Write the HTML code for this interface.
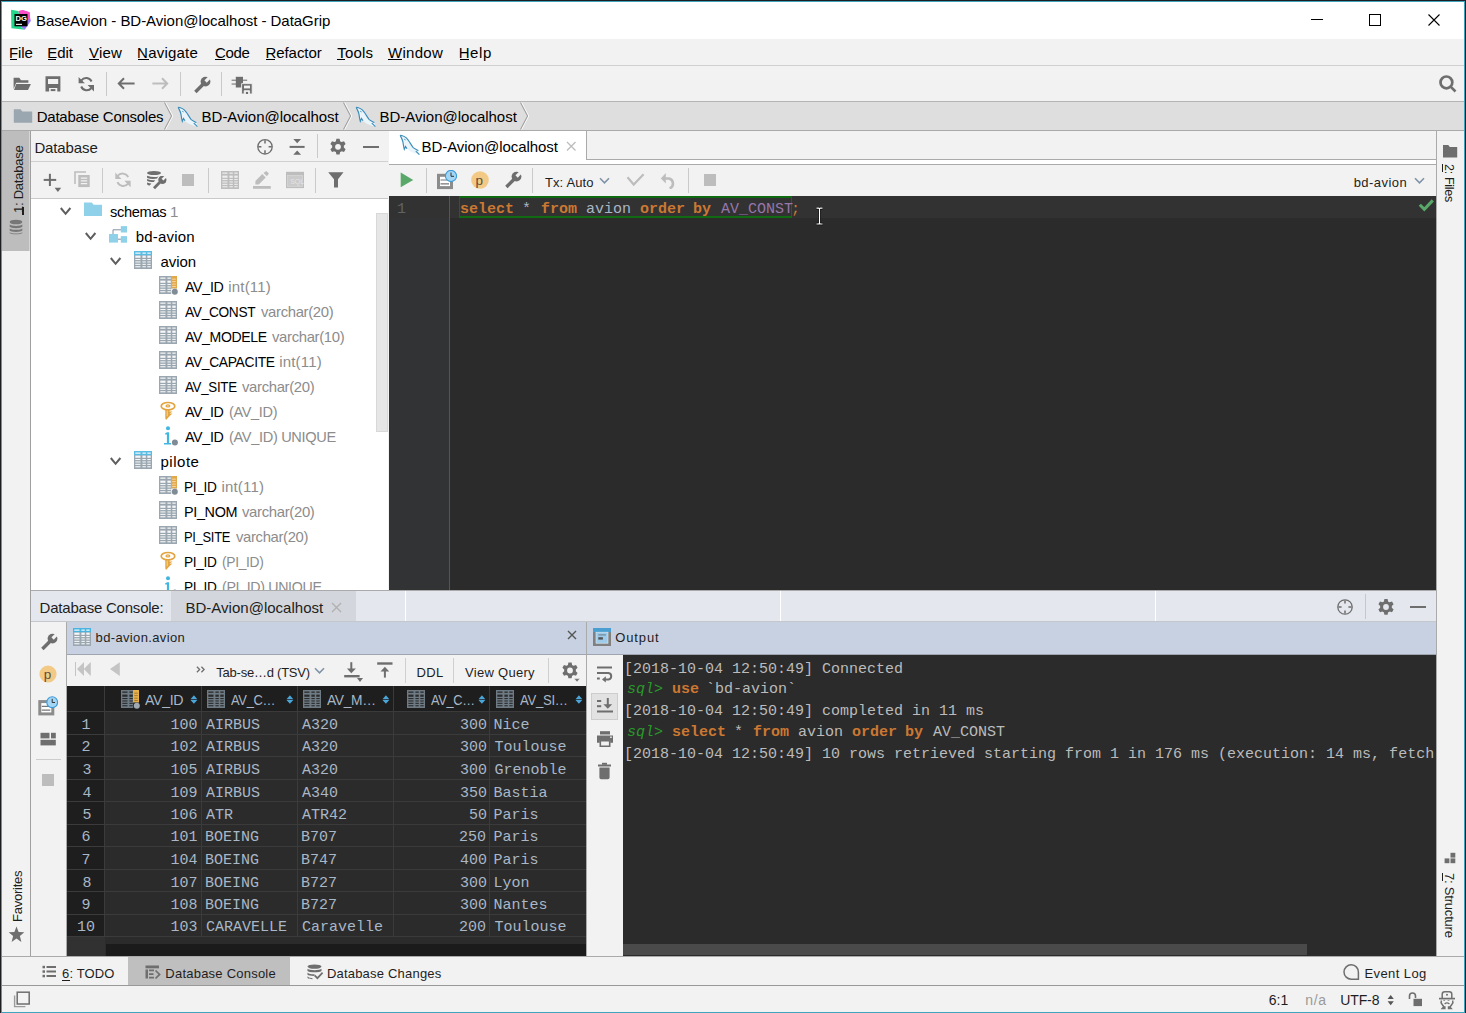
<!DOCTYPE html>
<html><head><meta charset="utf-8">
<style>
*{margin:0;padding:0;box-sizing:border-box}
html,body{width:1466px;height:1013px;overflow:hidden;background:#1c1f22}
body{position:relative;font-family:"Liberation Sans",sans-serif;font-size:15px;color:#000}
.a{position:absolute;display:block}
.t{position:absolute;white-space:nowrap;line-height:1}
</style></head><body>
<div class="a" style="left:1px;top:1px;width:1464px;height:1012px;background:#3fa3bd;"></div>
<div class="a" style="left:2px;top:2px;width:1462px;height:1010px;background:#f2f2f2;"></div>
<div class="a" style="left:2px;top:2px;width:1462px;height:37px;background:#ffffff;"></div>
<div class="t" style="left:36.00px;top:13.30px;font-size:15px;color:#000;letter-spacing:-0.032px;">BaseAvion - BD-Avion@localhost - DataGrip</div>
<div class="a" style="left:2px;top:39px;width:1462px;height:26px;background:#f2f2f2;"></div>
<div class="a" style="left:2px;top:65px;width:1462px;height:1px;background:#d0d0d0;"></div>
<div class="t" style="left:9.00px;top:45.30px;font-size:15px;color:#000;letter-spacing:-0.143px;">File</div>
<div class="t" style="left:47.30px;top:45.30px;font-size:15px;color:#000;letter-spacing:-0.093px;">Edit</div>
<div class="t" style="left:89.00px;top:45.30px;font-size:15px;color:#000;letter-spacing:0.197px;">View</div>
<div class="t" style="left:137.10px;top:45.30px;font-size:15px;color:#000;letter-spacing:0.220px;">Navigate</div>
<div class="t" style="left:215.00px;top:45.30px;font-size:15px;color:#000;letter-spacing:-0.306px;">Code</div>
<div class="t" style="left:265.40px;top:45.30px;font-size:15px;color:#000;letter-spacing:-0.042px;">Refactor</div>
<div class="t" style="left:337.20px;top:45.30px;font-size:15px;color:#000;letter-spacing:0.221px;">Tools</div>
<div class="t" style="left:388.00px;top:45.30px;font-size:15px;color:#000;letter-spacing:0.297px;">Window</div>
<div class="t" style="left:458.70px;top:45.30px;font-size:15px;color:#000;letter-spacing:0.564px;">Help</div>
<div class="a" style="left:2px;top:66px;width:1462px;height:35px;background:#f2f2f2;"></div>
<div class="a" style="left:2px;top:101px;width:1462px;height:1px;background:#b4b4b4;"></div>
<div class="a" style="left:2px;top:102px;width:1462px;height:28px;background:#dedede;"></div>
<div class="a" style="left:2px;top:130px;width:1462px;height:1px;background:#aaaaaa;"></div>
<div class="t" style="left:36.80px;top:109.30px;font-size:15px;color:#000;letter-spacing:-0.263px;">Database Consoles</div>
<div class="t" style="left:201.60px;top:109.30px;font-size:15px;color:#000;letter-spacing:-0.020px;">BD-Avion@localhost</div>
<div class="t" style="left:379.50px;top:109.30px;font-size:15px;color:#000;letter-spacing:-0.009px;">BD-Avion@localhost</div>
<div class="a" style="left:2px;top:131px;width:28px;height:825px;background:#f2f2f2;"></div>
<div class="a" style="left:2px;top:131px;width:27px;height:120px;background:#bdbdbd;"></div>
<div class="a" style="left:29px;top:131px;width:1px;height:120px;background:#d6d6d6;"></div>
<div class="a" style="left:30px;top:131px;width:1px;height:825px;background:#a0a0a0;"></div>
<div class="a" style="left:31px;top:131px;width:357px;height:30px;background:#f2f2f2;"></div>
<div class="a" style="left:31px;top:161px;width:357px;height:1px;background:#d0d0d0;"></div>
<div class="a" style="left:31px;top:162px;width:357px;height:36px;background:#f2f2f2;"></div>
<div class="a" style="left:31px;top:198px;width:357px;height:1px;background:#c9c9c9;"></div>
<div class="a" style="left:31px;top:199px;width:357px;height:391px;background:#ffffff;"></div>
<div class="a" style="left:376px;top:213px;width:12px;height:219px;background:#e6e6e6;border:1px solid #d8d8d8;"></div>
<div class="t" style="left:34.40px;top:140.30px;font-size:15px;color:#1e1e1e;letter-spacing:-0.124px;">Database</div>
<div class="t" style="left:110.00px;top:204.30px;font-size:15px;color:#000;letter-spacing:-0.350px;transform-origin:0 0;transform:scaleX(0.9761);">schemas</div>
<div class="t" style="left:170.10px;top:204.30px;font-size:15px;color:#8c8c8c;">1</div>
<div class="t" style="left:135.70px;top:229.30px;font-size:15px;color:#000;letter-spacing:0.200px;">bd-avion</div>
<div class="t" style="left:160.50px;top:254.30px;font-size:15px;color:#000;letter-spacing:-0.079px;">avion</div>
<div class="t" style="left:185.30px;top:279.30px;font-size:15px;color:#000;letter-spacing:-0.350px;transform-origin:0 0;transform:scaleX(0.9503);">AV_ID</div>
<div class="t" style="left:228.30px;top:279.30px;font-size:15px;color:#8c8c8c;letter-spacing:0.182px;">int(11)</div>
<div class="t" style="left:185.30px;top:304.30px;font-size:15px;color:#000;letter-spacing:-0.350px;transform-origin:0 0;transform:scaleX(0.9142);">AV_CONST</div>
<div class="t" style="left:260.70px;top:304.30px;font-size:15px;color:#8c8c8c;letter-spacing:-0.350px;transform-origin:0 0;transform:scaleX(0.9922);">varchar(20)</div>
<div class="t" style="left:185.30px;top:329.30px;font-size:15px;color:#000;letter-spacing:-0.350px;transform-origin:0 0;transform:scaleX(0.9362);">AV_MODELE</div>
<div class="t" style="left:272.40px;top:329.30px;font-size:15px;color:#8c8c8c;letter-spacing:-0.350px;transform-origin:0 0;transform:scaleX(0.9922);">varchar(10)</div>
<div class="t" style="left:185.30px;top:354.30px;font-size:15px;color:#000;letter-spacing:-0.350px;transform-origin:0 0;transform:scaleX(0.9225);">AV_CAPACITE</div>
<div class="t" style="left:279.20px;top:354.30px;font-size:15px;color:#8c8c8c;letter-spacing:0.182px;">int(11)</div>
<div class="t" style="left:185.30px;top:379.30px;font-size:15px;color:#000;letter-spacing:-0.350px;transform-origin:0 0;transform:scaleX(0.8898);">AV_SITE</div>
<div class="t" style="left:242.20px;top:379.30px;font-size:15px;color:#8c8c8c;letter-spacing:-0.350px;transform-origin:0 0;transform:scaleX(0.9922);">varchar(20)</div>
<div class="t" style="left:185.30px;top:404.30px;font-size:15px;color:#000;letter-spacing:-0.350px;transform-origin:0 0;transform:scaleX(0.9503);">AV_ID</div>
<div class="t" style="left:229.30px;top:404.30px;font-size:15px;color:#8c8c8c;letter-spacing:-0.350px;transform-origin:0 0;transform:scaleX(0.9668);">(AV_ID)</div>
<div class="t" style="left:185.30px;top:429.30px;font-size:15px;color:#000;letter-spacing:-0.350px;transform-origin:0 0;transform:scaleX(0.9503);">AV_ID</div>
<div class="t" style="left:229.30px;top:429.30px;font-size:15px;color:#8c8c8c;letter-spacing:-0.350px;transform-origin:0 0;transform:scaleX(0.9732);">(AV_ID) UNIQUE</div>
<div class="t" style="left:160.50px;top:454.30px;font-size:15px;color:#000;letter-spacing:0.517px;">pilote</div>
<div class="t" style="left:184.39px;top:479.30px;font-size:15px;color:#000;letter-spacing:-0.350px;transform-origin:0 0;transform:scaleX(0.9105);">PI_ID</div>
<div class="t" style="left:221.40px;top:479.30px;font-size:15px;color:#8c8c8c;letter-spacing:0.199px;">int(11)</div>
<div class="t" style="left:184.34px;top:504.30px;font-size:15px;color:#000;letter-spacing:-0.350px;transform-origin:0 0;transform:scaleX(0.9596);">PI_NOM</div>
<div class="t" style="left:242.40px;top:504.30px;font-size:15px;color:#8c8c8c;letter-spacing:-0.350px;transform-origin:0 0;transform:scaleX(0.9948);">varchar(20)</div>
<div class="t" style="left:184.44px;top:529.30px;font-size:15px;color:#000;letter-spacing:-0.350px;transform-origin:0 0;transform:scaleX(0.8624);">PI_SITE</div>
<div class="t" style="left:235.60px;top:529.30px;font-size:15px;color:#8c8c8c;letter-spacing:-0.350px;transform-origin:0 0;transform:scaleX(0.9896);">varchar(20)</div>
<div class="t" style="left:184.39px;top:554.30px;font-size:15px;color:#000;letter-spacing:-0.350px;transform-origin:0 0;transform:scaleX(0.9105);">PI_ID</div>
<div class="t" style="left:222.40px;top:554.30px;font-size:15px;color:#8c8c8c;letter-spacing:-0.350px;transform-origin:0 0;transform:scaleX(0.9198);">(PI_ID)</div>
<div class="t" style="left:184.39px;top:579.30px;font-size:15px;color:#000;letter-spacing:-0.350px;transform-origin:0 0;transform:scaleX(0.9105);">PI_ID</div>
<div class="t" style="left:222.40px;top:579.30px;font-size:15px;color:#8c8c8c;letter-spacing:-0.350px;transform-origin:0 0;transform:scaleX(0.9468);">(PI_ID) UNIQUE</div>
<div class="a" style="left:389px;top:131px;width:1047px;height:34px;background:#f2f2f2;"></div>
<div class="a" style="left:389px;top:159px;width:1047px;height:1px;background:#aaaaaa;"></div>
<div class="a" style="left:389px;top:160px;width:1047px;height:4px;background:#ffffff;"></div>
<div class="a" style="left:389px;top:164px;width:1047px;height:1px;background:#aaaaaa;"></div>
<div class="a" style="left:389px;top:131px;width:197px;height:33px;background:#ffffff;"></div>
<div class="a" style="left:586px;top:131px;width:1px;height:29px;background:#aaaaaa;"></div>
<div class="t" style="left:421.50px;top:139.30px;font-size:15px;color:#000;letter-spacing:-0.061px;">BD-Avion@localhost</div>
<div class="a" style="left:389px;top:165px;width:1047px;height:31px;background:#f2f2f2;"></div>
<div class="t" style="left:544.90px;top:176.00px;font-size:13px;color:#1e1e1e;letter-spacing:0.146px;">Tx: Auto</div>
<div class="t" style="left:1353.70px;top:176.00px;font-size:13px;color:#1e1e1e;letter-spacing:0.452px;">bd-avion</div>
<div class="a" style="left:389px;top:196px;width:1047px;height:394px;background:#2b2b2b;"></div>
<div class="a" style="left:389px;top:196px;width:60px;height:394px;background:#313335;"></div>
<div class="a" style="left:389px;top:196px;width:1047px;height:22px;background:#323232;"></div>
<div class="a" style="left:449px;top:196px;width:1px;height:394px;background:#555555;"></div>
<div class="a" style="left:459px;top:196px;width:333px;height:22px;background:transparent;border:2px solid #0f6a12;border-left-width:1.5px;border-right-width:1.5px;"></div>
<div class="t" style="left:460.00px;top:201.50px;font-size:15px;color:#cc7832;font-family:'Liberation Mono';font-weight:bold;">select</div>
<div class="t" style="left:522.00px;top:201.50px;font-size:15px;color:#a9b7c6;font-family:'Liberation Mono';">*</div>
<div class="t" style="left:541.00px;top:201.50px;font-size:15px;color:#cc7832;font-family:'Liberation Mono';font-weight:bold;">from</div>
<div class="t" style="left:586.00px;top:201.50px;font-size:15px;color:#a9b7c6;font-family:'Liberation Mono';">avion</div>
<div class="t" style="left:640.00px;top:201.50px;font-size:15px;color:#cc7832;font-family:'Liberation Mono';font-weight:bold;">order</div>
<div class="t" style="left:693.00px;top:201.50px;font-size:15px;color:#cc7832;font-family:'Liberation Mono';font-weight:bold;">by</div>
<div class="t" style="left:721.00px;top:201.50px;font-size:15px;color:#9876aa;font-family:'Liberation Mono';">AV_CONST</div>
<div class="t" style="left:791.00px;top:201.50px;font-size:15px;color:#cc7832;font-family:'Liberation Mono';">;</div>
<div class="t" style="left:397.00px;top:201.50px;font-size:15px;color:#606366;font-family:'Liberation Mono';">1</div>
<div class="a" style="left:389px;top:196px;width:1047px;height:394px;background:transparent;"></div>
<div class="a" style="left:1436px;top:131px;width:1px;height:825px;background:#aaaaaa;"></div>
<div class="a" style="left:1437px;top:131px;width:27px;height:825px;background:#f2f2f2;"></div>
<div class="a" style="left:31px;top:590px;width:1405px;height:1px;background:#aaaaaa;"></div>
<div class="a" style="left:31px;top:591px;width:1405px;height:30px;background:#e4e7ee;"></div>
<div class="a" style="left:31px;top:621px;width:1405px;height:1px;background:#c4c7cc;"></div>
<div class="a" style="left:171px;top:591px;width:185px;height:30px;background:#d3d6dc;"></div>
<div class="a" style="left:405px;top:591px;width:1px;height:30px;background:#ffffff;"></div>
<div class="a" style="left:780px;top:591px;width:1px;height:30px;background:#ffffff;"></div>
<div class="a" style="left:1155px;top:591px;width:1px;height:30px;background:#ffffff;"></div>
<div class="t" style="left:39.60px;top:600.30px;font-size:15px;color:#1e1e1e;letter-spacing:-0.220px;">Database Console:</div>
<div class="t" style="left:185.50px;top:600.30px;font-size:15px;color:#1e1e1e;letter-spacing:0.009px;">BD-Avion@localhost</div>
<div class="a" style="left:31px;top:622px;width:35px;height:334px;background:#f2f2f2;"></div>
<div class="a" style="left:66px;top:622px;width:1px;height:334px;background:#aaaaaa;"></div>
<div class="a" style="left:36px;top:759px;width:25px;height:1px;background:#cdcdcd;"></div>
<div class="a" style="left:67px;top:622px;width:519px;height:32px;background:#c7d1e1;"></div>
<div class="a" style="left:67px;top:654px;width:519px;height:1px;background:#9ea5ae;"></div>
<div class="a" style="left:67px;top:655px;width:519px;height:31px;background:#f2f2f2;"></div>
<div class="t" style="left:95.60px;top:631.00px;font-size:13px;color:#1e1e1e;letter-spacing:0.352px;">bd-avion.avion</div>
<div class="t" style="left:216.30px;top:666.00px;font-size:13px;color:#1e1e1e;letter-spacing:-0.236px;">Tab-se…d (TSV)</div>
<div class="t" style="left:416.50px;top:666.00px;font-size:13px;color:#1e1e1e;letter-spacing:0.312px;">DDL</div>
<div class="t" style="left:465.10px;top:666.00px;font-size:13px;color:#1e1e1e;letter-spacing:0.272px;">View Query</div>
<div class="a" style="left:405px;top:658px;width:1px;height:25px;background:#cfcfcf;"></div>
<div class="a" style="left:453px;top:658px;width:1px;height:25px;background:#cfcfcf;"></div>
<div class="a" style="left:548px;top:658px;width:1px;height:25px;background:#cfcfcf;"></div>
<div class="a" style="left:67px;top:686px;width:519px;height:270px;background:#2b2b2b;"></div>
<div class="a" style="left:67px;top:686px;width:519px;height:25px;background:#1e1e1e;"></div>
<div class="a" style="left:67px;top:686px;width:38px;height:251px;background:#1e1e1e;"></div>
<div class="a" style="left:67px;top:937px;width:38px;height:19px;background:#313131;"></div>
<div class="a" style="left:106px;top:944px;width:480px;height:12px;background:#1b1b1b;"></div>
<div class="a" style="left:67px;top:711px;width:519px;height:1px;background:#3b3b3b;"></div>
<div class="a" style="left:67px;top:734px;width:519px;height:1px;background:#3b3b3b;"></div>
<div class="a" style="left:67px;top:756px;width:519px;height:1px;background:#3b3b3b;"></div>
<div class="a" style="left:67px;top:779px;width:519px;height:1px;background:#3b3b3b;"></div>
<div class="a" style="left:67px;top:801px;width:519px;height:1px;background:#3b3b3b;"></div>
<div class="a" style="left:67px;top:824px;width:519px;height:1px;background:#3b3b3b;"></div>
<div class="a" style="left:67px;top:846px;width:519px;height:1px;background:#3b3b3b;"></div>
<div class="a" style="left:67px;top:869px;width:519px;height:1px;background:#3b3b3b;"></div>
<div class="a" style="left:67px;top:891px;width:519px;height:1px;background:#3b3b3b;"></div>
<div class="a" style="left:67px;top:914px;width:519px;height:1px;background:#3b3b3b;"></div>
<div class="a" style="left:67px;top:936px;width:519px;height:1px;background:#3b3b3b;"></div>
<div class="a" style="left:104px;top:686px;width:1px;height:251px;background:#3b3b3b;"></div>
<div class="a" style="left:201px;top:686px;width:1px;height:251px;background:#3b3b3b;"></div>
<div class="a" style="left:297px;top:686px;width:1px;height:251px;background:#3b3b3b;"></div>
<div class="a" style="left:393px;top:686px;width:1px;height:251px;background:#3b3b3b;"></div>
<div class="a" style="left:489px;top:686px;width:1px;height:251px;background:#3b3b3b;"></div>
<div class="t" style="left:145.30px;top:692.30px;font-size:15px;color:#a9b7c6;letter-spacing:-0.350px;transform-origin:0 0;transform:scaleX(0.9456);">AV_ID</div>
<div class="t" style="left:231.20px;top:692.30px;font-size:15px;color:#a9b7c6;letter-spacing:-0.350px;transform-origin:0 0;transform:scaleX(0.8615);">AV_C…</div>
<div class="t" style="left:326.90px;top:692.30px;font-size:15px;color:#a9b7c6;letter-spacing:-0.350px;transform-origin:0 0;transform:scaleX(0.9197);">AV_M…</div>
<div class="t" style="left:431.30px;top:692.30px;font-size:15px;color:#a9b7c6;letter-spacing:-0.350px;transform-origin:0 0;transform:scaleX(0.8518);">AV_C…</div>
<div class="t" style="left:520.10px;top:692.30px;font-size:15px;color:#a9b7c6;letter-spacing:-0.350px;transform-origin:0 0;transform:scaleX(0.8757);">AV_SI…</div>
<div class="t" style="left:81.50px;top:717.50px;font-size:15px;color:#a9b7c6;font-family:'Liberation Mono';">1</div>
<div class="t" style="left:170.50px;top:717.50px;font-size:15px;color:#a9b7c6;font-family:'Liberation Mono';">100</div>
<div class="t" style="left:206.00px;top:717.50px;font-size:15px;color:#a9b7c6;font-family:'Liberation Mono';">AIRBUS</div>
<div class="t" style="left:302.00px;top:717.50px;font-size:15px;color:#a9b7c6;font-family:'Liberation Mono';">A320</div>
<div class="t" style="left:460.00px;top:717.50px;font-size:15px;color:#a9b7c6;font-family:'Liberation Mono';">300</div>
<div class="t" style="left:493.50px;top:717.50px;font-size:15px;color:#a9b7c6;font-family:'Liberation Mono';">Nice</div>
<div class="t" style="left:81.50px;top:739.50px;font-size:15px;color:#a9b7c6;font-family:'Liberation Mono';">2</div>
<div class="t" style="left:170.50px;top:739.50px;font-size:15px;color:#a9b7c6;font-family:'Liberation Mono';">102</div>
<div class="t" style="left:206.00px;top:739.50px;font-size:15px;color:#a9b7c6;font-family:'Liberation Mono';">AIRBUS</div>
<div class="t" style="left:302.00px;top:739.50px;font-size:15px;color:#a9b7c6;font-family:'Liberation Mono';">A320</div>
<div class="t" style="left:460.00px;top:739.50px;font-size:15px;color:#a9b7c6;font-family:'Liberation Mono';">300</div>
<div class="t" style="left:494.50px;top:739.50px;font-size:15px;color:#a9b7c6;font-family:'Liberation Mono';">Toulouse</div>
<div class="t" style="left:82.50px;top:762.50px;font-size:15px;color:#a9b7c6;font-family:'Liberation Mono';">3</div>
<div class="t" style="left:170.50px;top:762.50px;font-size:15px;color:#a9b7c6;font-family:'Liberation Mono';">105</div>
<div class="t" style="left:206.00px;top:762.50px;font-size:15px;color:#a9b7c6;font-family:'Liberation Mono';">AIRBUS</div>
<div class="t" style="left:302.00px;top:762.50px;font-size:15px;color:#a9b7c6;font-family:'Liberation Mono';">A320</div>
<div class="t" style="left:460.00px;top:762.50px;font-size:15px;color:#a9b7c6;font-family:'Liberation Mono';">300</div>
<div class="t" style="left:494.50px;top:762.50px;font-size:15px;color:#a9b7c6;font-family:'Liberation Mono';">Grenoble</div>
<div class="t" style="left:82.50px;top:785.50px;font-size:15px;color:#a9b7c6;font-family:'Liberation Mono';">4</div>
<div class="t" style="left:170.50px;top:785.50px;font-size:15px;color:#a9b7c6;font-family:'Liberation Mono';">109</div>
<div class="t" style="left:206.00px;top:785.50px;font-size:15px;color:#a9b7c6;font-family:'Liberation Mono';">AIRBUS</div>
<div class="t" style="left:302.00px;top:785.50px;font-size:15px;color:#a9b7c6;font-family:'Liberation Mono';">A340</div>
<div class="t" style="left:460.00px;top:785.50px;font-size:15px;color:#a9b7c6;font-family:'Liberation Mono';">350</div>
<div class="t" style="left:493.50px;top:785.50px;font-size:15px;color:#a9b7c6;font-family:'Liberation Mono';">Bastia</div>
<div class="t" style="left:82.50px;top:807.50px;font-size:15px;color:#a9b7c6;font-family:'Liberation Mono';">5</div>
<div class="t" style="left:170.50px;top:807.50px;font-size:15px;color:#a9b7c6;font-family:'Liberation Mono';">106</div>
<div class="t" style="left:206.00px;top:807.50px;font-size:15px;color:#a9b7c6;font-family:'Liberation Mono';">ATR</div>
<div class="t" style="left:302.00px;top:807.50px;font-size:15px;color:#a9b7c6;font-family:'Liberation Mono';">ATR42</div>
<div class="t" style="left:469.00px;top:807.50px;font-size:15px;color:#a9b7c6;font-family:'Liberation Mono';">50</div>
<div class="t" style="left:493.50px;top:807.50px;font-size:15px;color:#a9b7c6;font-family:'Liberation Mono';">Paris</div>
<div class="t" style="left:81.50px;top:829.50px;font-size:15px;color:#a9b7c6;font-family:'Liberation Mono';">6</div>
<div class="t" style="left:170.50px;top:829.50px;font-size:15px;color:#a9b7c6;font-family:'Liberation Mono';">101</div>
<div class="t" style="left:205.00px;top:829.50px;font-size:15px;color:#a9b7c6;font-family:'Liberation Mono';">BOEING</div>
<div class="t" style="left:301.00px;top:829.50px;font-size:15px;color:#a9b7c6;font-family:'Liberation Mono';">B707</div>
<div class="t" style="left:459.00px;top:829.50px;font-size:15px;color:#a9b7c6;font-family:'Liberation Mono';">250</div>
<div class="t" style="left:493.50px;top:829.50px;font-size:15px;color:#a9b7c6;font-family:'Liberation Mono';">Paris</div>
<div class="t" style="left:81.50px;top:852.50px;font-size:15px;color:#a9b7c6;font-family:'Liberation Mono';">7</div>
<div class="t" style="left:170.50px;top:852.50px;font-size:15px;color:#a9b7c6;font-family:'Liberation Mono';">104</div>
<div class="t" style="left:205.00px;top:852.50px;font-size:15px;color:#a9b7c6;font-family:'Liberation Mono';">BOEING</div>
<div class="t" style="left:301.00px;top:852.50px;font-size:15px;color:#a9b7c6;font-family:'Liberation Mono';">B747</div>
<div class="t" style="left:460.00px;top:852.50px;font-size:15px;color:#a9b7c6;font-family:'Liberation Mono';">400</div>
<div class="t" style="left:493.50px;top:852.50px;font-size:15px;color:#a9b7c6;font-family:'Liberation Mono';">Paris</div>
<div class="t" style="left:82.50px;top:875.50px;font-size:15px;color:#a9b7c6;font-family:'Liberation Mono';">8</div>
<div class="t" style="left:170.50px;top:875.50px;font-size:15px;color:#a9b7c6;font-family:'Liberation Mono';">107</div>
<div class="t" style="left:205.00px;top:875.50px;font-size:15px;color:#a9b7c6;font-family:'Liberation Mono';">BOEING</div>
<div class="t" style="left:301.00px;top:875.50px;font-size:15px;color:#a9b7c6;font-family:'Liberation Mono';">B727</div>
<div class="t" style="left:460.00px;top:875.50px;font-size:15px;color:#a9b7c6;font-family:'Liberation Mono';">300</div>
<div class="t" style="left:493.50px;top:875.50px;font-size:15px;color:#a9b7c6;font-family:'Liberation Mono';">Lyon</div>
<div class="t" style="left:81.50px;top:897.50px;font-size:15px;color:#a9b7c6;font-family:'Liberation Mono';">9</div>
<div class="t" style="left:170.50px;top:897.50px;font-size:15px;color:#a9b7c6;font-family:'Liberation Mono';">108</div>
<div class="t" style="left:205.00px;top:897.50px;font-size:15px;color:#a9b7c6;font-family:'Liberation Mono';">BOEING</div>
<div class="t" style="left:301.00px;top:897.50px;font-size:15px;color:#a9b7c6;font-family:'Liberation Mono';">B727</div>
<div class="t" style="left:460.00px;top:897.50px;font-size:15px;color:#a9b7c6;font-family:'Liberation Mono';">300</div>
<div class="t" style="left:493.50px;top:897.50px;font-size:15px;color:#a9b7c6;font-family:'Liberation Mono';">Nantes</div>
<div class="t" style="left:77.00px;top:919.50px;font-size:15px;color:#a9b7c6;font-family:'Liberation Mono';">10</div>
<div class="t" style="left:170.50px;top:919.50px;font-size:15px;color:#a9b7c6;font-family:'Liberation Mono';">103</div>
<div class="t" style="left:206.00px;top:919.50px;font-size:15px;color:#a9b7c6;font-family:'Liberation Mono';">CARAVELLE</div>
<div class="t" style="left:302.00px;top:919.50px;font-size:15px;color:#a9b7c6;font-family:'Liberation Mono';">Caravelle</div>
<div class="t" style="left:459.00px;top:919.50px;font-size:15px;color:#a9b7c6;font-family:'Liberation Mono';">200</div>
<div class="t" style="left:494.50px;top:919.50px;font-size:15px;color:#a9b7c6;font-family:'Liberation Mono';">Toulouse</div>
<div class="a" style="left:586px;top:622px;width:1px;height:334px;background:#aaaaaa;"></div>
<div class="a" style="left:587px;top:622px;width:849px;height:32px;background:#c7d1e1;"></div>
<div class="a" style="left:587px;top:654px;width:849px;height:1px;background:#9ea5ae;"></div>
<div class="a" style="left:587px;top:655px;width:36px;height:301px;background:#f2f2f2;"></div>
<div class="a" style="left:623px;top:655px;width:813px;height:301px;background:#2b2b2b;"></div>
<div class="a" style="left:623px;top:944px;width:684px;height:11px;background:#4a4a4a;"></div>
<div class="t" style="left:615.30px;top:631.00px;font-size:13px;color:#1e1e1e;letter-spacing:0.857px;">Output</div>
<div class="t" style="left:624.00px;top:661.50px;font-size:15px;color:#bbbbbb;font-family:'Liberation Mono';">[2018-10-04 12:50:49] Connected</div>
<div class="t" style="left:627.00px;top:681.50px;font-size:15px;color:#299a29;font-family:'Liberation Mono';font-style:italic;">sql&gt;</div>
<div class="t" style="left:672.00px;top:681.50px;font-size:15px;color:#cc7832;font-family:'Liberation Mono';font-weight:bold;">use</div>
<div class="t" style="left:706.00px;top:681.50px;font-size:15px;color:#bbbbbb;font-family:'Liberation Mono';">`bd-avion`</div>
<div class="t" style="left:624.00px;top:703.50px;font-size:15px;color:#bbbbbb;font-family:'Liberation Mono';">[2018-10-04 12:50:49] completed in 11 ms</div>
<div class="t" style="left:627.00px;top:724.50px;font-size:15px;color:#299a29;font-family:'Liberation Mono';font-style:italic;">sql&gt;</div>
<div class="t" style="left:672.00px;top:724.50px;font-size:15px;color:#cc7832;font-family:'Liberation Mono';font-weight:bold;">select</div>
<div class="t" style="left:734.00px;top:724.50px;font-size:15px;color:#bbbbbb;font-family:'Liberation Mono';">*</div>
<div class="t" style="left:753.00px;top:724.50px;font-size:15px;color:#cc7832;font-family:'Liberation Mono';font-weight:bold;">from</div>
<div class="t" style="left:798.00px;top:724.50px;font-size:15px;color:#bbbbbb;font-family:'Liberation Mono';">avion</div>
<div class="t" style="left:852.00px;top:724.50px;font-size:15px;color:#cc7832;font-family:'Liberation Mono';font-weight:bold;">order</div>
<div class="t" style="left:905.00px;top:724.50px;font-size:15px;color:#cc7832;font-family:'Liberation Mono';font-weight:bold;">by</div>
<div class="t" style="left:933.00px;top:724.50px;font-size:15px;color:#bbbbbb;font-family:'Liberation Mono';">AV_CONST</div>
<div class="t" style="left:624.00px;top:746.50px;font-size:15px;color:#bbbbbb;font-family:'Liberation Mono';">[2018-10-04 12:50:49] 10 rows retrieved starting from 1 in 176 ms (execution: 14 ms, fetch:</div>
<div class="a" style="left:1437px;top:600px;width:27px;height:356px;background:#f2f2f2;"></div>
<div class="a" style="left:1436px;top:622px;width:1px;height:334px;background:#aaaaaa;"></div>
<div class="a" style="left:2px;top:956px;width:1462px;height:1px;background:#aaaaaa;"></div>
<div class="a" style="left:2px;top:957px;width:1462px;height:28px;background:#f2f2f2;"></div>
<div class="a" style="left:128px;top:957px;width:162px;height:28px;background:#bfbfbf;"></div>
<div class="a" style="left:2px;top:985px;width:1462px;height:1px;background:#999999;"></div>
<div class="t" style="left:62.10px;top:967.00px;font-size:13px;color:#1e1e1e;letter-spacing:0.123px;">6: TODO</div>
<div class="t" style="left:165.30px;top:967.00px;font-size:13px;color:#1e1e1e;letter-spacing:0.231px;">Database Console</div>
<div class="t" style="left:326.90px;top:967.00px;font-size:13px;color:#1e1e1e;letter-spacing:0.207px;">Database Changes</div>
<div class="t" style="left:1364.40px;top:967.00px;font-size:13px;color:#1e1e1e;letter-spacing:0.423px;">Event Log</div>
<div class="a" style="left:2px;top:986px;width:1462px;height:26px;background:#f2f2f2;"></div>
<div class="t" style="left:1268.70px;top:993.15px;font-size:14px;color:#1e1e1e;">6</div>
<div class="t" style="left:1276.50px;top:993.15px;font-size:14px;color:#1e1e1e;">:</div>
<div class="t" style="left:1280.50px;top:993.15px;font-size:14px;color:#1e1e1e;">1</div>
<div class="t" style="left:1305.20px;top:993.15px;font-size:14px;color:#9a9a9a;letter-spacing:0.712px;">n/a</div>
<div class="t" style="left:1340.20px;top:993.15px;font-size:14px;color:#1e1e1e;letter-spacing:-0.094px;">UTF-8</div>
<svg class="a" style="left:8px;top:7px;" width="26" height="26" viewBox="0 0 26 26"><polygon points="3,2.8 10.5,4 13,20 16.8,22.8 3.4,21.3" fill="#21d789"/><polygon points="14.2,3 19.5,4.5 22.9,13.8 16.8,22.8 13,20" fill="#9775f8"/><polygon points="10.5,4 14.2,3 21.8,5.2 22.2,12.5 12,11" fill="#fc4ec5"/><rect x="6.5" y="7" width="13" height="12.3" fill="#000"/><text x="7.6" y="14.3" font-family="Liberation Sans" font-size="7.6" font-weight="bold" fill="#fff" letter-spacing="-0.2">DG</text><rect x="8" y="16.8" width="6" height="1.1" fill="#fff"/></svg>
<div class="a" style="left:1311px;top:19px;width:12px;height:1px;background:#000;"></div>
<svg class="a" style="left:1368px;top:13px;" width="14" height="14" viewBox="0 0 14 14"><rect x="1.5" y="1.5" width="11" height="11" fill="none" stroke="#000" stroke-width="1"/></svg>
<svg class="a" style="left:1427px;top:13px;" width="14" height="14" viewBox="0 0 14 14"><path d="M1.5 1.5L12.5 12.5M12.5 1.5L1.5 12.5" stroke="#000" stroke-width="1.1"/></svg>
<div class="a" style="left:10px;top:59px;width:7px;height:1px;background:#000;"></div>
<div class="a" style="left:48px;top:59px;width:8px;height:1px;background:#000;"></div>
<div class="a" style="left:89px;top:59px;width:10px;height:1px;background:#000;"></div>
<div class="a" style="left:138px;top:59px;width:11px;height:1px;background:#000;"></div>
<div class="a" style="left:215px;top:59px;width:10px;height:1px;background:#000;"></div>
<div class="a" style="left:266px;top:59px;width:9px;height:1px;background:#000;"></div>
<div class="a" style="left:337px;top:59px;width:8px;height:1px;background:#000;"></div>
<div class="a" style="left:388px;top:59px;width:14px;height:1px;background:#000;"></div>
<div class="a" style="left:460px;top:59px;width:9px;height:1px;background:#000;"></div>
<svg class="a" style="left:13px;top:77px;" width="19" height="14" viewBox="0 0 19 14"><path d="M0.6 0.8H6.3L8 3.2H15.4V5.8H3.2L0.6 12Z" fill="#6e6e6e"/><path d="M3.2 7H17.9L15 13H1Z" fill="#6e6e6e"/></svg>
<svg class="a" style="left:45px;top:76px;" width="16" height="16" viewBox="0 0 16 16"><path d="M0.5 0.3H15.4V15.5H12.3V11.9H4.1V15.5H0.5Z M3 3.1V7.9H13.2V3.1Z" fill="#6e6e6e" fill-rule="evenodd"/><rect x="5.7" y="13.1" width="4.7" height="2" fill="#6e6e6e"/></svg>
<svg class="a" style="left:78px;top:76px;" width="17" height="17" viewBox="0 0 17 17"><path d="M13.6 5.5A6 6 0 0 0 3.4 4.3" fill="none" stroke="#6e6e6e" stroke-width="2"/><path d="M0.6 1V7.3H6.8Z" fill="#6e6e6e"/><path d="M3.2 10.5A6 6 0 0 0 13.4 12" fill="none" stroke="#6e6e6e" stroke-width="2"/><path d="M16 15.5V9H9.6Z" fill="#6e6e6e"/></svg>
<div class="a" style="left:106px;top:72px;width:1px;height:24px;background:#cacaca;"></div>
<div class="a" style="left:180px;top:72px;width:1px;height:24px;background:#cacaca;"></div>
<div class="a" style="left:221px;top:72px;width:1px;height:24px;background:#cacaca;"></div>
<svg class="a" style="left:117px;top:77px;" width="19" height="14" viewBox="0 0 19 14"><path d="M7 1.3L1.8 6.5L7 11.7M2 6.5H17.6" fill="none" stroke="#6e6e6e" stroke-width="2"/></svg>
<svg class="a" style="left:151px;top:77px;" width="19" height="14" viewBox="0 0 19 14"><path d="M11 1.3L16.2 6.5L11 11.7M16 6.5H1.4" fill="none" stroke="#bdbdbd" stroke-width="2"/></svg>
<svg class="a" style="left:192.5px;top:75.5px;" width="18" height="18" viewBox="0 0 18 18"><path d="M2.4 16L10.6 7.8" stroke="#6e6e6e" stroke-width="3.4"/><circle cx="12.5" cy="5.6" r="4.9" fill="#6e6e6e"/><path d="M12.6 5.5L17.5 0.6" stroke="#f2f2f2" stroke-width="3.2"/></svg>
<svg class="a" style="left:231px;top:76px;" width="22" height="19" viewBox="0 0 22 19"><rect x="0.6" y="3.6" width="15.6" height="1.3" fill="#8a8a8a"/><rect x="0.6" y="7.4" width="15.6" height="1.3" fill="#8a8a8a"/><rect x="4.8" y="0.8" width="7.2" height="10.7" fill="#6e6e6e"/><path d="M10.6 7.6H21.2V18H18.6V14.7H13.2V18H10.6Z" fill="#6e6e6e" stroke="#f2f2f2" stroke-width="0.9"/><rect x="13" y="9.6" width="6" height="2.8" fill="#f2f2f2"/><rect x="14.9" y="15.9" width="2.2" height="2.1" fill="#6e6e6e"/></svg>
<svg class="a" style="left:1438px;top:74px;" width="20" height="21" viewBox="0 0 20 21"><circle cx="8.4" cy="8.4" r="5.9" fill="none" stroke="#6e6e6e" stroke-width="2.7"/><path d="M12.6 12.6L17.5 17.5" stroke="#6e6e6e" stroke-width="2.6"/></svg>
<svg class="a" style="left:13px;top:109px;" width="20" height="14" viewBox="0 0 20 14"><path d="M0.8 0.3H7.6L9.3 2.5H19.2V13.7H0.8Z" fill="#9aa7b0"/></svg>
<svg class="a" style="left:163px;top:102px;" width="11" height="28" viewBox="0 0 11 28"><path d="M1.5 0.5L8.6 14L1.5 27.5" fill="none" stroke="#ffffff" stroke-width="1.2" transform="translate(0.9,0)"/><path d="M1.5 0.5L8.6 14L1.5 27.5" fill="none" stroke="#a0a0a0" stroke-width="1.1"/></svg>
<svg class="a" style="left:342px;top:102px;" width="11" height="28" viewBox="0 0 11 28"><path d="M1.5 0.5L8.6 14L1.5 27.5" fill="none" stroke="#ffffff" stroke-width="1.2" transform="translate(0.9,0)"/><path d="M1.5 0.5L8.6 14L1.5 27.5" fill="none" stroke="#a0a0a0" stroke-width="1.1"/></svg>
<svg class="a" style="left:519px;top:102px;" width="11" height="28" viewBox="0 0 11 28"><path d="M1.5 0.5L8.6 14L1.5 27.5" fill="none" stroke="#ffffff" stroke-width="1.2" transform="translate(0.9,0)"/><path d="M1.5 0.5L8.6 14L1.5 27.5" fill="none" stroke="#a0a0a0" stroke-width="1.1"/></svg>
<svg class="a" style="left:174px;top:103px;" width="28" height="28" viewBox="0 0 28 28"><path d="M4.2 4.3C7 4.6 10 6.3 12 8.8C14 11.3 15.4 14.4 17 16.3C18.6 17.9 20.6 18.4 22.4 19.6L23.6 23.8C20 23.2 15.5 21.5 12.3 19.1L10.2 17.4L8.3 18.3C7.5 15.8 7.3 13.2 6.9 10.8C6.5 8.5 5 6.4 4.2 4.3Z" fill="#eaf5fb"/><path d="M4.2 4.3C7 4.6 10 6.3 12 8.8C14 11.3 15.4 14.4 17 16.3C18.6 17.9 20.6 18.4 22.4 19.6" stroke="#3a8cb8" fill="none" stroke-width="1.15"/><path d="M4.2 4.3C5 6.4 6.5 8.5 6.9 10.8C7.3 13.2 7.5 15.8 8.3 18.3L9.5 15.5L11 17.8" stroke="#3a8cb8" fill="none" stroke-width="1.15"/><path d="M19.8 20.2L23.4 23.6" stroke="#3a8cb8" stroke-width="1.15"/><path d="M8.2 8.2L9.6 8.9" stroke="#3a8cb8" stroke-width="0.9"/></svg>
<svg class="a" style="left:351.8px;top:103px;" width="28" height="28" viewBox="0 0 28 28"><path d="M4.2 4.3C7 4.6 10 6.3 12 8.8C14 11.3 15.4 14.4 17 16.3C18.6 17.9 20.6 18.4 22.4 19.6L23.6 23.8C20 23.2 15.5 21.5 12.3 19.1L10.2 17.4L8.3 18.3C7.5 15.8 7.3 13.2 6.9 10.8C6.5 8.5 5 6.4 4.2 4.3Z" fill="#eaf5fb"/><path d="M4.2 4.3C7 4.6 10 6.3 12 8.8C14 11.3 15.4 14.4 17 16.3C18.6 17.9 20.6 18.4 22.4 19.6" stroke="#3a8cb8" fill="none" stroke-width="1.15"/><path d="M4.2 4.3C5 6.4 6.5 8.5 6.9 10.8C7.3 13.2 7.5 15.8 8.3 18.3L9.5 15.5L11 17.8" stroke="#3a8cb8" fill="none" stroke-width="1.15"/><path d="M19.8 20.2L23.4 23.6" stroke="#3a8cb8" stroke-width="1.15"/><path d="M8.2 8.2L9.6 8.9" stroke="#3a8cb8" stroke-width="0.9"/></svg>
<svg class="a" style="left:256px;top:138px;" width="18" height="18" viewBox="0 0 18 18"><circle cx="9" cy="8.8" r="7.2" fill="none" stroke="#6e6e6e" stroke-width="1.3"/><path d="M9 2.2V5.4M9 12.2V15.4M2.2 8.8H5.4M12.6 8.8H15.8" stroke="#6e6e6e" stroke-width="1.5"/></svg>
<svg class="a" style="left:288px;top:138px;" width="18" height="18" viewBox="0 0 18 18"><rect x="1.6" y="7.9" width="15" height="2" fill="#6e6e6e"/><path d="M5.3 1H13.1L9.2 5.3Z M5.3 16.8H13.1L9.2 12.5Z" fill="#6e6e6e"/></svg>
<div class="a" style="left:317px;top:134px;width:1px;height:24px;background:#cacaca;"></div>
<svg class="a" style="left:329px;top:138px;" width="18" height="18" viewBox="0 0 18 18"><path fill="#6e6e6e" fill-rule="evenodd" d="M9 8.8m-1.6 -8h3.2l0.5 2.4a6 6 0 0 1 1.6 0.9l2.3-0.8 1.6 2.8-1.8 1.6a6 6 0 0 1 0 1.9l1.8 1.6-1.6 2.8-2.3-0.8a6 6 0 0 1-1.6 0.9l-0.5 2.4h-3.2l-0.5-2.4a6 6 0 0 1-1.6-0.9l-2.3 0.8-1.6-2.8 1.8-1.6a6 6 0 0 1 0-1.9l-1.8-1.6 1.6-2.8 2.3 0.8a6 6 0 0 1 1.6-0.9z M9 8.8m-2.9 0a2.9 2.9 0 1 0 5.8 0a2.9 2.9 0 1 0 -5.8 0z"/></svg>
<div class="a" style="left:363px;top:146px;width:16px;height:2px;background:#6e6e6e;"></div>
<svg class="a" style="left:43px;top:173px;" width="20" height="20" viewBox="0 0 20 20"><rect x="0.7" y="5.9" width="12.5" height="2" fill="#6e6e6e"/><rect x="5.9" y="0.8" width="2" height="12.2" fill="#6e6e6e"/><path d="M11.6 14.7H18.2L14.9 19Z" fill="#6e6e6e"/></svg>
<svg class="a" style="left:74px;top:171px;" width="17" height="17" viewBox="0 0 17 17"><path d="M1 13V1H12" fill="none" stroke="#bdbdbd" stroke-width="1.6"/><rect x="4.3" y="4" width="11.4" height="12.1" fill="#bdbdbd"/><path d="M6.8 7.2H13.2M6.8 9.9H13.2M6.8 12.6H13.2" stroke="#f2f2f2" stroke-width="1.2"/></svg>
<div class="a" style="left:102px;top:168px;width:1px;height:25px;background:#cacaca;"></div>
<svg class="a" style="left:114px;top:171px;" width="18" height="18" viewBox="0 0 18 18"><path d="M14.2 6.2A6.2 6.2 0 0 0 3.6 5" fill="none" stroke="#bdbdbd" stroke-width="1.9"/><path d="M1.3 1.6V8H7.5Z" fill="#bdbdbd"/><path d="M3.5 11.2A6.2 6.2 0 0 0 14.1 12.6" fill="none" stroke="#bdbdbd" stroke-width="1.9"/><path d="M16.6 16.2V9.8H10.3Z" fill="#bdbdbd"/></svg>
<svg class="a" style="left:143px;top:168px;" width="24" height="24" viewBox="0 0 24 24"><ellipse cx="11" cy="5" rx="7" ry="2" fill="#6e6e6e"/><path d="M4 7.8Q11 10.2 16.2 8.2L14.4 10.4Q9 11.6 4.2 9.9Z M4 11.1Q8.5 12.7 12.2 12.2L10.8 14Q7 14.4 4.2 13.1Z M4 14.5Q6.6 15.5 8.4 15.6L6.7 17.5Q5 17.2 4.2 16.4Z" fill="#6e6e6e"/><g stroke="#f2f2f2" stroke-width="1.4" fill="#6e6e6e"><path d="M11 20.2L16.6 14.6" stroke-width="4.2"/><circle cx="19.4" cy="11.8" r="4.6"/></g><path d="M11 20.2L16.6 14.6" stroke="#6e6e6e" stroke-width="2.8"/><circle cx="19.4" cy="11.8" r="3.9" fill="#6e6e6e"/><path d="M19.5 11.7L23.5 7.7" stroke="#f2f2f2" stroke-width="2.6"/></svg>
<div class="a" style="left:182px;top:174px;width:12px;height:12px;background:#bdbdbd;"></div>
<div class="a" style="left:208px;top:168px;width:1px;height:25px;background:#cacaca;"></div>
<svg class="a" style="left:221px;top:171px;" width="20" height="20" viewBox="0 0 20 20"><rect x="0" y="0" width="18" height="18" fill="#bdbdbd"/><rect x="1.3" y="1.5" width="5.2" height="1.3" fill="#f2f2f2" opacity="0.85"/><rect x="1.3" y="4.6" width="5.2" height="2.2" fill="#f2f2f2" opacity="0.9"/><rect x="1.3" y="8.0" width="5.2" height="1.1" fill="#f2f2f2" opacity="0.9"/><rect x="1.3" y="10.4" width="5.2" height="1.1" fill="#f2f2f2" opacity="0.9"/><rect x="1.3" y="12.8" width="5.2" height="1.1" fill="#f2f2f2" opacity="0.9"/><rect x="1.3" y="15.2" width="5.2" height="1.1" fill="#f2f2f2" opacity="0.9"/><rect x="8.4" y="1.5" width="3.4" height="1.3" fill="#f2f2f2" opacity="0.85"/><rect x="8.4" y="4.6" width="3.4" height="2.2" fill="#f2f2f2" opacity="0.9"/><rect x="8.4" y="8.0" width="3.4" height="1.1" fill="#f2f2f2" opacity="0.9"/><rect x="8.4" y="10.4" width="3.4" height="1.1" fill="#f2f2f2" opacity="0.9"/><rect x="8.4" y="12.8" width="3.4" height="1.1" fill="#f2f2f2" opacity="0.9"/><rect x="8.4" y="15.2" width="3.4" height="1.1" fill="#f2f2f2" opacity="0.9"/><rect x="13.3" y="1.5" width="3.4" height="1.3" fill="#f2f2f2" opacity="0.85"/><rect x="13.3" y="4.6" width="3.4" height="2.2" fill="#f2f2f2" opacity="0.9"/><rect x="13.3" y="8.0" width="3.4" height="1.1" fill="#f2f2f2" opacity="0.9"/><rect x="13.3" y="10.4" width="3.4" height="1.1" fill="#f2f2f2" opacity="0.9"/><rect x="13.3" y="12.8" width="3.4" height="1.1" fill="#f2f2f2" opacity="0.9"/><rect x="13.3" y="15.2" width="3.4" height="1.1" fill="#f2f2f2" opacity="0.9"/></svg>
<svg class="a" style="left:252px;top:170px;" width="20" height="20" viewBox="0 0 20 20"><path d="M11.5 2.9L14.3 0.9L16.9 3.6L14.9 6.3Z M10.3 4.1L13.7 7.5L6.8 14.4H3.4V11Z" fill="#bdbdbd"/><rect x="1" y="16" width="17.8" height="2.8" fill="#bdbdbd"/></svg>
<svg class="a" style="left:286px;top:171px;" width="19" height="18" viewBox="0 0 19 18"><rect x="0" y="0.8" width="18" height="16.3" fill="#bdbdbd"/><rect x="1.6" y="4.3" width="14.8" height="11.2" fill="#cacaca" stroke="#dddddd" stroke-width="0.6"/><text x="4.2" y="12.6" font-family="Liberation Sans" font-size="7" fill="#e4e4e4">SQL</text></svg>
<div class="a" style="left:315px;top:168px;width:1px;height:25px;background:#cacaca;"></div>
<svg class="a" style="left:328px;top:172px;" width="16" height="16" viewBox="0 0 16 16"><path d="M0.2 0.2H15.5L10 7.3V15.6H6V7.3Z" fill="#6e6e6e"/></svg>
<svg class="a" style="left:60px;top:207px;" width="12" height="9" viewBox="0 0 12 9"><path d="M0.8 1L5.6 6.8L10.4 1" fill="none" stroke="#5e5e5e" stroke-width="2"/></svg>
<svg class="a" style="left:84px;top:202px;" width="18" height="15" viewBox="0 0 18 15"><path d="M0 0.4H7.8L9.6 2.8H18V14H0Z" fill="#8fd1e9"/></svg>
<svg class="a" style="left:85px;top:232px;" width="12" height="9" viewBox="0 0 12 9"><path d="M0.8 1L5.6 6.8L10.4 1" fill="none" stroke="#5e5e5e" stroke-width="2"/></svg>
<svg class="a" style="left:108px;top:225px;" width="20" height="19" viewBox="0 0 20 19"><path d="M5 9V4.8H13" fill="none" stroke="#8592a0" stroke-width="1"/><path d="M9 14.2H13" stroke="#8592a0" stroke-width="1"/><rect x="1" y="9" width="9" height="8.6" fill="#8fd1e9"/><rect x="12.8" y="1.1" width="6.2" height="6.4" fill="#8fd1e9"/><rect x="12.8" y="11.1" width="6.2" height="6.6" fill="#8fd1e9"/></svg>
<svg class="a" style="left:110px;top:257px;" width="12" height="9" viewBox="0 0 12 9"><path d="M0.8 1L5.6 6.8L10.4 1" fill="none" stroke="#5e5e5e" stroke-width="2"/></svg>
<svg class="a" style="left:134px;top:251px;" width="20" height="20" viewBox="0 0 20 20"><rect x="0" y="0" width="18" height="18" fill="#9aa7b0"/><rect x="0" y="0" width="18" height="4.3" fill="#5bbde3"/><rect x="1.3" y="1.5" width="5.2" height="1.3" fill="#ffffff" opacity="0.85"/><rect x="1.3" y="4.6" width="5.2" height="2.2" fill="#ffffff" opacity="0.9"/><rect x="1.3" y="8.0" width="5.2" height="1.1" fill="#ffffff" opacity="0.9"/><rect x="1.3" y="10.4" width="5.2" height="1.1" fill="#ffffff" opacity="0.9"/><rect x="1.3" y="12.8" width="5.2" height="1.1" fill="#ffffff" opacity="0.9"/><rect x="1.3" y="15.2" width="5.2" height="1.1" fill="#ffffff" opacity="0.9"/><rect x="8.4" y="1.5" width="3.4" height="1.3" fill="#ffffff" opacity="0.85"/><rect x="8.4" y="4.6" width="3.4" height="2.2" fill="#ffffff" opacity="0.9"/><rect x="8.4" y="8.0" width="3.4" height="1.1" fill="#ffffff" opacity="0.9"/><rect x="8.4" y="10.4" width="3.4" height="1.1" fill="#ffffff" opacity="0.9"/><rect x="8.4" y="12.8" width="3.4" height="1.1" fill="#ffffff" opacity="0.9"/><rect x="8.4" y="15.2" width="3.4" height="1.1" fill="#ffffff" opacity="0.9"/><rect x="13.3" y="1.5" width="3.4" height="1.3" fill="#ffffff" opacity="0.85"/><rect x="13.3" y="4.6" width="3.4" height="2.2" fill="#ffffff" opacity="0.9"/><rect x="13.3" y="8.0" width="3.4" height="1.1" fill="#ffffff" opacity="0.9"/><rect x="13.3" y="10.4" width="3.4" height="1.1" fill="#ffffff" opacity="0.9"/><rect x="13.3" y="12.8" width="3.4" height="1.1" fill="#ffffff" opacity="0.9"/><rect x="13.3" y="15.2" width="3.4" height="1.1" fill="#ffffff" opacity="0.9"/></svg>
<svg class="a" style="left:159px;top:276px;" width="20" height="20" viewBox="0 0 20 20"><rect x="0" y="0" width="18" height="18" fill="#9aa7b0"/><rect x="1.3" y="1.5" width="5.2" height="1.3" fill="#ffffff" opacity="0.85"/><rect x="1.3" y="4.6" width="5.2" height="2.2" fill="#ffffff" opacity="0.9"/><rect x="1.3" y="8.0" width="5.2" height="1.1" fill="#ffffff" opacity="0.9"/><rect x="1.3" y="10.4" width="5.2" height="1.1" fill="#ffffff" opacity="0.9"/><rect x="1.3" y="12.8" width="5.2" height="1.1" fill="#ffffff" opacity="0.9"/><rect x="1.3" y="15.2" width="5.2" height="1.1" fill="#ffffff" opacity="0.9"/><rect x="8.4" y="1.5" width="3.4" height="1.3" fill="#ffffff" opacity="0.85"/><rect x="8.4" y="4.6" width="3.4" height="2.2" fill="#ffffff" opacity="0.9"/><rect x="8.4" y="8.0" width="3.4" height="1.1" fill="#ffffff" opacity="0.9"/><rect x="8.4" y="10.4" width="3.4" height="1.1" fill="#ffffff" opacity="0.9"/><rect x="8.4" y="12.8" width="3.4" height="1.1" fill="#ffffff" opacity="0.9"/><rect x="8.4" y="15.2" width="3.4" height="1.1" fill="#ffffff" opacity="0.9"/><rect x="13.3" y="1.5" width="3.4" height="1.3" fill="#ffffff" opacity="0.85"/><rect x="13.3" y="4.6" width="3.4" height="2.2" fill="#ffffff" opacity="0.9"/><rect x="13.3" y="8.0" width="3.4" height="1.1" fill="#ffffff" opacity="0.9"/><rect x="13.3" y="10.4" width="3.4" height="1.1" fill="#ffffff" opacity="0.9"/><rect x="13.3" y="12.8" width="3.4" height="1.1" fill="#ffffff" opacity="0.9"/><rect x="13.3" y="15.2" width="3.4" height="1.1" fill="#ffffff" opacity="0.9"/><rect x="12" y="0" width="6" height="12.6" fill="#e2a84c"/><rect x="13.2" y="2.7" width="3.6" height="0.9" fill="#f5dcae"/><rect x="13.2" y="5.2" width="3.6" height="0.9" fill="#f5dcae"/><rect x="13.2" y="7.7" width="3.6" height="0.9" fill="#f5dcae"/><rect x="13.2" y="10.0" width="3.6" height="0.9" fill="#f5dcae"/><rect x="12.2" y="12.6" width="5.8" height="5.4" fill="#ffffff"/><circle cx="15.8" cy="15.8" r="3" fill="#7f8b95"/></svg>
<svg class="a" style="left:159px;top:301px;" width="20" height="20" viewBox="0 0 20 20"><rect x="0" y="0" width="18" height="18" fill="#9aa7b0"/><rect x="1.3" y="1.5" width="5.2" height="1.3" fill="#ffffff" opacity="0.85"/><rect x="1.3" y="4.6" width="5.2" height="2.2" fill="#ffffff" opacity="0.9"/><rect x="1.3" y="8.0" width="5.2" height="1.1" fill="#ffffff" opacity="0.9"/><rect x="1.3" y="10.4" width="5.2" height="1.1" fill="#ffffff" opacity="0.9"/><rect x="1.3" y="12.8" width="5.2" height="1.1" fill="#ffffff" opacity="0.9"/><rect x="1.3" y="15.2" width="5.2" height="1.1" fill="#ffffff" opacity="0.9"/><rect x="8.4" y="1.5" width="3.4" height="1.3" fill="#ffffff" opacity="0.85"/><rect x="8.4" y="4.6" width="3.4" height="2.2" fill="#ffffff" opacity="0.9"/><rect x="8.4" y="8.0" width="3.4" height="1.1" fill="#ffffff" opacity="0.9"/><rect x="8.4" y="10.4" width="3.4" height="1.1" fill="#ffffff" opacity="0.9"/><rect x="8.4" y="12.8" width="3.4" height="1.1" fill="#ffffff" opacity="0.9"/><rect x="8.4" y="15.2" width="3.4" height="1.1" fill="#ffffff" opacity="0.9"/><rect x="13.3" y="1.5" width="3.4" height="1.3" fill="#ffffff" opacity="0.85"/><rect x="13.3" y="4.6" width="3.4" height="2.2" fill="#ffffff" opacity="0.9"/><rect x="13.3" y="8.0" width="3.4" height="1.1" fill="#ffffff" opacity="0.9"/><rect x="13.3" y="10.4" width="3.4" height="1.1" fill="#ffffff" opacity="0.9"/><rect x="13.3" y="12.8" width="3.4" height="1.1" fill="#ffffff" opacity="0.9"/><rect x="13.3" y="15.2" width="3.4" height="1.1" fill="#ffffff" opacity="0.9"/></svg>
<svg class="a" style="left:159px;top:326px;" width="20" height="20" viewBox="0 0 20 20"><rect x="0" y="0" width="18" height="18" fill="#9aa7b0"/><rect x="1.3" y="1.5" width="5.2" height="1.3" fill="#ffffff" opacity="0.85"/><rect x="1.3" y="4.6" width="5.2" height="2.2" fill="#ffffff" opacity="0.9"/><rect x="1.3" y="8.0" width="5.2" height="1.1" fill="#ffffff" opacity="0.9"/><rect x="1.3" y="10.4" width="5.2" height="1.1" fill="#ffffff" opacity="0.9"/><rect x="1.3" y="12.8" width="5.2" height="1.1" fill="#ffffff" opacity="0.9"/><rect x="1.3" y="15.2" width="5.2" height="1.1" fill="#ffffff" opacity="0.9"/><rect x="8.4" y="1.5" width="3.4" height="1.3" fill="#ffffff" opacity="0.85"/><rect x="8.4" y="4.6" width="3.4" height="2.2" fill="#ffffff" opacity="0.9"/><rect x="8.4" y="8.0" width="3.4" height="1.1" fill="#ffffff" opacity="0.9"/><rect x="8.4" y="10.4" width="3.4" height="1.1" fill="#ffffff" opacity="0.9"/><rect x="8.4" y="12.8" width="3.4" height="1.1" fill="#ffffff" opacity="0.9"/><rect x="8.4" y="15.2" width="3.4" height="1.1" fill="#ffffff" opacity="0.9"/><rect x="13.3" y="1.5" width="3.4" height="1.3" fill="#ffffff" opacity="0.85"/><rect x="13.3" y="4.6" width="3.4" height="2.2" fill="#ffffff" opacity="0.9"/><rect x="13.3" y="8.0" width="3.4" height="1.1" fill="#ffffff" opacity="0.9"/><rect x="13.3" y="10.4" width="3.4" height="1.1" fill="#ffffff" opacity="0.9"/><rect x="13.3" y="12.8" width="3.4" height="1.1" fill="#ffffff" opacity="0.9"/><rect x="13.3" y="15.2" width="3.4" height="1.1" fill="#ffffff" opacity="0.9"/></svg>
<svg class="a" style="left:159px;top:351px;" width="20" height="20" viewBox="0 0 20 20"><rect x="0" y="0" width="18" height="18" fill="#9aa7b0"/><rect x="1.3" y="1.5" width="5.2" height="1.3" fill="#ffffff" opacity="0.85"/><rect x="1.3" y="4.6" width="5.2" height="2.2" fill="#ffffff" opacity="0.9"/><rect x="1.3" y="8.0" width="5.2" height="1.1" fill="#ffffff" opacity="0.9"/><rect x="1.3" y="10.4" width="5.2" height="1.1" fill="#ffffff" opacity="0.9"/><rect x="1.3" y="12.8" width="5.2" height="1.1" fill="#ffffff" opacity="0.9"/><rect x="1.3" y="15.2" width="5.2" height="1.1" fill="#ffffff" opacity="0.9"/><rect x="8.4" y="1.5" width="3.4" height="1.3" fill="#ffffff" opacity="0.85"/><rect x="8.4" y="4.6" width="3.4" height="2.2" fill="#ffffff" opacity="0.9"/><rect x="8.4" y="8.0" width="3.4" height="1.1" fill="#ffffff" opacity="0.9"/><rect x="8.4" y="10.4" width="3.4" height="1.1" fill="#ffffff" opacity="0.9"/><rect x="8.4" y="12.8" width="3.4" height="1.1" fill="#ffffff" opacity="0.9"/><rect x="8.4" y="15.2" width="3.4" height="1.1" fill="#ffffff" opacity="0.9"/><rect x="13.3" y="1.5" width="3.4" height="1.3" fill="#ffffff" opacity="0.85"/><rect x="13.3" y="4.6" width="3.4" height="2.2" fill="#ffffff" opacity="0.9"/><rect x="13.3" y="8.0" width="3.4" height="1.1" fill="#ffffff" opacity="0.9"/><rect x="13.3" y="10.4" width="3.4" height="1.1" fill="#ffffff" opacity="0.9"/><rect x="13.3" y="12.8" width="3.4" height="1.1" fill="#ffffff" opacity="0.9"/><rect x="13.3" y="15.2" width="3.4" height="1.1" fill="#ffffff" opacity="0.9"/></svg>
<svg class="a" style="left:159px;top:376px;" width="20" height="20" viewBox="0 0 20 20"><rect x="0" y="0" width="18" height="18" fill="#9aa7b0"/><rect x="1.3" y="1.5" width="5.2" height="1.3" fill="#ffffff" opacity="0.85"/><rect x="1.3" y="4.6" width="5.2" height="2.2" fill="#ffffff" opacity="0.9"/><rect x="1.3" y="8.0" width="5.2" height="1.1" fill="#ffffff" opacity="0.9"/><rect x="1.3" y="10.4" width="5.2" height="1.1" fill="#ffffff" opacity="0.9"/><rect x="1.3" y="12.8" width="5.2" height="1.1" fill="#ffffff" opacity="0.9"/><rect x="1.3" y="15.2" width="5.2" height="1.1" fill="#ffffff" opacity="0.9"/><rect x="8.4" y="1.5" width="3.4" height="1.3" fill="#ffffff" opacity="0.85"/><rect x="8.4" y="4.6" width="3.4" height="2.2" fill="#ffffff" opacity="0.9"/><rect x="8.4" y="8.0" width="3.4" height="1.1" fill="#ffffff" opacity="0.9"/><rect x="8.4" y="10.4" width="3.4" height="1.1" fill="#ffffff" opacity="0.9"/><rect x="8.4" y="12.8" width="3.4" height="1.1" fill="#ffffff" opacity="0.9"/><rect x="8.4" y="15.2" width="3.4" height="1.1" fill="#ffffff" opacity="0.9"/><rect x="13.3" y="1.5" width="3.4" height="1.3" fill="#ffffff" opacity="0.85"/><rect x="13.3" y="4.6" width="3.4" height="2.2" fill="#ffffff" opacity="0.9"/><rect x="13.3" y="8.0" width="3.4" height="1.1" fill="#ffffff" opacity="0.9"/><rect x="13.3" y="10.4" width="3.4" height="1.1" fill="#ffffff" opacity="0.9"/><rect x="13.3" y="12.8" width="3.4" height="1.1" fill="#ffffff" opacity="0.9"/><rect x="13.3" y="15.2" width="3.4" height="1.1" fill="#ffffff" opacity="0.9"/></svg>
<svg class="a" style="left:159px;top:401px;" width="20" height="20" viewBox="0 0 20 20"><ellipse cx="9" cy="5.2" rx="6.8" ry="3.7" fill="none" stroke="#e3a541" stroke-width="1.7"/><ellipse cx="8.9" cy="4.9" rx="1.9" ry="1" fill="none" stroke="#e3a541" stroke-width="1.2"/><path d="M6.3 8.6H10.5V10.6H13.7L10.5 12.4H13.4L10.2 15.6L7.1 18.9L6.3 17.4Z" fill="#e3a541"/><path d="M8.2 9.6V15.2" stroke="#f2d59c" stroke-width="1" fill="none"/></svg>
<svg class="a" style="left:159px;top:426px;clip-path:inset(0 0 0px 0);" width="20" height="20" viewBox="0 0 20 20"><circle cx="9" cy="2.2" r="2" fill="#40b6e0"/><path d="M6.2 7.2L8.2 6.2H10.1V17H12V18.6H5V17H7.9V8.4H6.2Z" fill="#40b6e0"/><circle cx="15.9" cy="16.6" r="3" fill="#7f8b95"/></svg>
<svg class="a" style="left:110px;top:457px;" width="12" height="9" viewBox="0 0 12 9"><path d="M0.8 1L5.6 6.8L10.4 1" fill="none" stroke="#5e5e5e" stroke-width="2"/></svg>
<svg class="a" style="left:134px;top:451px;" width="20" height="20" viewBox="0 0 20 20"><rect x="0" y="0" width="18" height="18" fill="#9aa7b0"/><rect x="0" y="0" width="18" height="4.3" fill="#5bbde3"/><rect x="1.3" y="1.5" width="5.2" height="1.3" fill="#ffffff" opacity="0.85"/><rect x="1.3" y="4.6" width="5.2" height="2.2" fill="#ffffff" opacity="0.9"/><rect x="1.3" y="8.0" width="5.2" height="1.1" fill="#ffffff" opacity="0.9"/><rect x="1.3" y="10.4" width="5.2" height="1.1" fill="#ffffff" opacity="0.9"/><rect x="1.3" y="12.8" width="5.2" height="1.1" fill="#ffffff" opacity="0.9"/><rect x="1.3" y="15.2" width="5.2" height="1.1" fill="#ffffff" opacity="0.9"/><rect x="8.4" y="1.5" width="3.4" height="1.3" fill="#ffffff" opacity="0.85"/><rect x="8.4" y="4.6" width="3.4" height="2.2" fill="#ffffff" opacity="0.9"/><rect x="8.4" y="8.0" width="3.4" height="1.1" fill="#ffffff" opacity="0.9"/><rect x="8.4" y="10.4" width="3.4" height="1.1" fill="#ffffff" opacity="0.9"/><rect x="8.4" y="12.8" width="3.4" height="1.1" fill="#ffffff" opacity="0.9"/><rect x="8.4" y="15.2" width="3.4" height="1.1" fill="#ffffff" opacity="0.9"/><rect x="13.3" y="1.5" width="3.4" height="1.3" fill="#ffffff" opacity="0.85"/><rect x="13.3" y="4.6" width="3.4" height="2.2" fill="#ffffff" opacity="0.9"/><rect x="13.3" y="8.0" width="3.4" height="1.1" fill="#ffffff" opacity="0.9"/><rect x="13.3" y="10.4" width="3.4" height="1.1" fill="#ffffff" opacity="0.9"/><rect x="13.3" y="12.8" width="3.4" height="1.1" fill="#ffffff" opacity="0.9"/><rect x="13.3" y="15.2" width="3.4" height="1.1" fill="#ffffff" opacity="0.9"/></svg>
<svg class="a" style="left:159px;top:476px;" width="20" height="20" viewBox="0 0 20 20"><rect x="0" y="0" width="18" height="18" fill="#9aa7b0"/><rect x="1.3" y="1.5" width="5.2" height="1.3" fill="#ffffff" opacity="0.85"/><rect x="1.3" y="4.6" width="5.2" height="2.2" fill="#ffffff" opacity="0.9"/><rect x="1.3" y="8.0" width="5.2" height="1.1" fill="#ffffff" opacity="0.9"/><rect x="1.3" y="10.4" width="5.2" height="1.1" fill="#ffffff" opacity="0.9"/><rect x="1.3" y="12.8" width="5.2" height="1.1" fill="#ffffff" opacity="0.9"/><rect x="1.3" y="15.2" width="5.2" height="1.1" fill="#ffffff" opacity="0.9"/><rect x="8.4" y="1.5" width="3.4" height="1.3" fill="#ffffff" opacity="0.85"/><rect x="8.4" y="4.6" width="3.4" height="2.2" fill="#ffffff" opacity="0.9"/><rect x="8.4" y="8.0" width="3.4" height="1.1" fill="#ffffff" opacity="0.9"/><rect x="8.4" y="10.4" width="3.4" height="1.1" fill="#ffffff" opacity="0.9"/><rect x="8.4" y="12.8" width="3.4" height="1.1" fill="#ffffff" opacity="0.9"/><rect x="8.4" y="15.2" width="3.4" height="1.1" fill="#ffffff" opacity="0.9"/><rect x="13.3" y="1.5" width="3.4" height="1.3" fill="#ffffff" opacity="0.85"/><rect x="13.3" y="4.6" width="3.4" height="2.2" fill="#ffffff" opacity="0.9"/><rect x="13.3" y="8.0" width="3.4" height="1.1" fill="#ffffff" opacity="0.9"/><rect x="13.3" y="10.4" width="3.4" height="1.1" fill="#ffffff" opacity="0.9"/><rect x="13.3" y="12.8" width="3.4" height="1.1" fill="#ffffff" opacity="0.9"/><rect x="13.3" y="15.2" width="3.4" height="1.1" fill="#ffffff" opacity="0.9"/><rect x="12" y="0" width="6" height="12.6" fill="#e2a84c"/><rect x="13.2" y="2.7" width="3.6" height="0.9" fill="#f5dcae"/><rect x="13.2" y="5.2" width="3.6" height="0.9" fill="#f5dcae"/><rect x="13.2" y="7.7" width="3.6" height="0.9" fill="#f5dcae"/><rect x="13.2" y="10.0" width="3.6" height="0.9" fill="#f5dcae"/><rect x="12.2" y="12.6" width="5.8" height="5.4" fill="#ffffff"/><circle cx="15.8" cy="15.8" r="3" fill="#7f8b95"/></svg>
<svg class="a" style="left:159px;top:501px;" width="20" height="20" viewBox="0 0 20 20"><rect x="0" y="0" width="18" height="18" fill="#9aa7b0"/><rect x="1.3" y="1.5" width="5.2" height="1.3" fill="#ffffff" opacity="0.85"/><rect x="1.3" y="4.6" width="5.2" height="2.2" fill="#ffffff" opacity="0.9"/><rect x="1.3" y="8.0" width="5.2" height="1.1" fill="#ffffff" opacity="0.9"/><rect x="1.3" y="10.4" width="5.2" height="1.1" fill="#ffffff" opacity="0.9"/><rect x="1.3" y="12.8" width="5.2" height="1.1" fill="#ffffff" opacity="0.9"/><rect x="1.3" y="15.2" width="5.2" height="1.1" fill="#ffffff" opacity="0.9"/><rect x="8.4" y="1.5" width="3.4" height="1.3" fill="#ffffff" opacity="0.85"/><rect x="8.4" y="4.6" width="3.4" height="2.2" fill="#ffffff" opacity="0.9"/><rect x="8.4" y="8.0" width="3.4" height="1.1" fill="#ffffff" opacity="0.9"/><rect x="8.4" y="10.4" width="3.4" height="1.1" fill="#ffffff" opacity="0.9"/><rect x="8.4" y="12.8" width="3.4" height="1.1" fill="#ffffff" opacity="0.9"/><rect x="8.4" y="15.2" width="3.4" height="1.1" fill="#ffffff" opacity="0.9"/><rect x="13.3" y="1.5" width="3.4" height="1.3" fill="#ffffff" opacity="0.85"/><rect x="13.3" y="4.6" width="3.4" height="2.2" fill="#ffffff" opacity="0.9"/><rect x="13.3" y="8.0" width="3.4" height="1.1" fill="#ffffff" opacity="0.9"/><rect x="13.3" y="10.4" width="3.4" height="1.1" fill="#ffffff" opacity="0.9"/><rect x="13.3" y="12.8" width="3.4" height="1.1" fill="#ffffff" opacity="0.9"/><rect x="13.3" y="15.2" width="3.4" height="1.1" fill="#ffffff" opacity="0.9"/></svg>
<svg class="a" style="left:159px;top:526px;" width="20" height="20" viewBox="0 0 20 20"><rect x="0" y="0" width="18" height="18" fill="#9aa7b0"/><rect x="1.3" y="1.5" width="5.2" height="1.3" fill="#ffffff" opacity="0.85"/><rect x="1.3" y="4.6" width="5.2" height="2.2" fill="#ffffff" opacity="0.9"/><rect x="1.3" y="8.0" width="5.2" height="1.1" fill="#ffffff" opacity="0.9"/><rect x="1.3" y="10.4" width="5.2" height="1.1" fill="#ffffff" opacity="0.9"/><rect x="1.3" y="12.8" width="5.2" height="1.1" fill="#ffffff" opacity="0.9"/><rect x="1.3" y="15.2" width="5.2" height="1.1" fill="#ffffff" opacity="0.9"/><rect x="8.4" y="1.5" width="3.4" height="1.3" fill="#ffffff" opacity="0.85"/><rect x="8.4" y="4.6" width="3.4" height="2.2" fill="#ffffff" opacity="0.9"/><rect x="8.4" y="8.0" width="3.4" height="1.1" fill="#ffffff" opacity="0.9"/><rect x="8.4" y="10.4" width="3.4" height="1.1" fill="#ffffff" opacity="0.9"/><rect x="8.4" y="12.8" width="3.4" height="1.1" fill="#ffffff" opacity="0.9"/><rect x="8.4" y="15.2" width="3.4" height="1.1" fill="#ffffff" opacity="0.9"/><rect x="13.3" y="1.5" width="3.4" height="1.3" fill="#ffffff" opacity="0.85"/><rect x="13.3" y="4.6" width="3.4" height="2.2" fill="#ffffff" opacity="0.9"/><rect x="13.3" y="8.0" width="3.4" height="1.1" fill="#ffffff" opacity="0.9"/><rect x="13.3" y="10.4" width="3.4" height="1.1" fill="#ffffff" opacity="0.9"/><rect x="13.3" y="12.8" width="3.4" height="1.1" fill="#ffffff" opacity="0.9"/><rect x="13.3" y="15.2" width="3.4" height="1.1" fill="#ffffff" opacity="0.9"/></svg>
<svg class="a" style="left:159px;top:551px;" width="20" height="20" viewBox="0 0 20 20"><ellipse cx="9" cy="5.2" rx="6.8" ry="3.7" fill="none" stroke="#e3a541" stroke-width="1.7"/><ellipse cx="8.9" cy="4.9" rx="1.9" ry="1" fill="none" stroke="#e3a541" stroke-width="1.2"/><path d="M6.3 8.6H10.5V10.6H13.7L10.5 12.4H13.4L10.2 15.6L7.1 18.9L6.3 17.4Z" fill="#e3a541"/><path d="M8.2 9.6V15.2" stroke="#f2d59c" stroke-width="1" fill="none"/></svg>
<svg class="a" style="left:159px;top:576px;clip-path:inset(0 0 6px 0);" width="20" height="20" viewBox="0 0 20 20"><circle cx="9" cy="2.2" r="2" fill="#40b6e0"/><path d="M6.2 7.2L8.2 6.2H10.1V17H12V18.6H5V17H7.9V8.4H6.2Z" fill="#40b6e0"/><circle cx="15.9" cy="16.6" r="3" fill="#7f8b95"/></svg>
<div class="t" style="left:11.60px;top:213.30px;font-size:13px;color:#1e1e1e;letter-spacing:-0.247px;transform-origin:0 0;transform:rotate(-90deg);">1: Database</div>
<div class="a" style="left:22px;top:207px;width:2px;height:8px;background:#1e1e1e;"></div>
<svg class="a" style="left:9px;top:219px;" width="15" height="17" viewBox="0 0 15 17"><ellipse cx="7" cy="3" rx="6.3" ry="2.3" fill="#777"/><path d="M0.7 5.6C1.5 7.4 12.5 7.4 13.3 5.6V7.8C12.5 9.6 1.5 9.6 0.7 7.8Z M0.7 9.4C1.5 11.2 12.5 11.2 13.3 9.4V11.6C12.5 13.4 1.5 13.4 0.7 11.6Z M0.7 13.2C1.5 15 12.5 15 13.3 13.2V13.9C12.5 15.7 1.5 15.7 0.7 13.9Z" fill="#777"/></svg>
<div class="t" style="left:11.30px;top:922.10px;font-size:13px;color:#1e1e1e;letter-spacing:-0.232px;transform-origin:0 0;transform:rotate(-90deg);">Favorites</div>
<svg class="a" style="left:7.5px;top:925.5px;" width="17" height="17" viewBox="0 0 17 17"><path d="M8.5 0.6L10.6 6L16.3 6.2L11.9 9.9L13.4 15.9L8.5 12.5L3.6 15.9L5.1 9.9L0.7 6.2L6.4 6Z" fill="#6e6e6e"/></svg>
<div class="t" style="left:1456.00px;top:164.00px;font-size:13px;color:#1e1e1e;letter-spacing:-0.350px;transform-origin:0 0;transform:rotate(90deg) scaleX(0.9681);">2: Files</div>
<div class="a" style="left:1442px;top:164px;width:1.3px;height:7.5px;background:#1e1e1e;"></div>
<svg class="a" style="left:1443px;top:145px;" width="15" height="13" viewBox="0 0 15 13"><path d="M0 0H5.3L6.8 2H14.2V12.6H0Z" fill="#6e6e6e"/></svg>
<div class="t" style="left:1455.60px;top:872.60px;font-size:13px;color:#1e1e1e;letter-spacing:-0.206px;transform-origin:0 0;transform:rotate(90deg);">7: Structure</div>
<div class="a" style="left:1442px;top:872.6px;width:1.3px;height:8px;background:#1e1e1e;"></div>
<svg class="a" style="left:1444px;top:852px;" width="13" height="13" viewBox="0 0 13 13"><rect x="6.5" y="0.8" width="4.8" height="4.8" fill="#6e6e6e"/><rect x="0.6" y="6.4" width="4.8" height="4.8" fill="#6e6e6e"/><rect x="6.5" y="6.4" width="4.8" height="4.8" fill="#6e6e6e"/></svg>
<svg class="a" style="left:395.6px;top:130.6px;" width="28" height="28" viewBox="0 0 28 28"><path d="M4.2 4.3C7 4.6 10 6.3 12 8.8C14 11.3 15.4 14.4 17 16.3C18.6 17.9 20.6 18.4 22.4 19.6L23.6 23.8C20 23.2 15.5 21.5 12.3 19.1L10.2 17.4L8.3 18.3C7.5 15.8 7.3 13.2 6.9 10.8C6.5 8.5 5 6.4 4.2 4.3Z" fill="#eaf5fb"/><path d="M4.2 4.3C7 4.6 10 6.3 12 8.8C14 11.3 15.4 14.4 17 16.3C18.6 17.9 20.6 18.4 22.4 19.6" stroke="#3a8cb8" fill="none" stroke-width="1.15"/><path d="M4.2 4.3C5 6.4 6.5 8.5 6.9 10.8C7.3 13.2 7.5 15.8 8.3 18.3L9.5 15.5L11 17.8" stroke="#3a8cb8" fill="none" stroke-width="1.15"/><path d="M19.8 20.2L23.4 23.6" stroke="#3a8cb8" stroke-width="1.15"/><path d="M8.2 8.2L9.6 8.9" stroke="#3a8cb8" stroke-width="0.9"/></svg>
<svg class="a" style="left:566px;top:141px;" width="11" height="11" viewBox="0 0 11 11"><path d="M1 1L9.5 9.5M9.5 1L1 9.5" stroke="#bcbcbc" stroke-width="1.3"/></svg>
<svg class="a" style="left:400px;top:172px;" width="14" height="16" viewBox="0 0 14 16"><path d="M0.7 0.6L13.2 7.9L0.7 15.3Z" fill="#59a869"/></svg>
<div class="a" style="left:426px;top:168px;width:1px;height:25px;background:#cacaca;"></div>
<svg class="a" style="left:437px;top:170px;" width="22" height="20" viewBox="0 0 22 20"><rect x="1.5" y="5.3" width="13" height="12.3" fill="#fff" stroke="#8c8c8c" stroke-width="3"/><path d="M3.5 10H11M3.5 13.8H12" stroke="#777" stroke-width="1.2"/><circle cx="14" cy="6" r="5.6" fill="#a3d6f5" stroke="#3b9ad9" stroke-width="1.1"/><path d="M14 2.5V6.3H17" fill="none" stroke="#333" stroke-width="1"/></svg>
<svg class="a" style="left:470px;top:170px;" width="20" height="20" viewBox="0 0 20 20"><circle cx="10" cy="10" r="8.8" fill="#f2ca86"/><text x="5.6" y="14.6" font-family="Liberation Sans" font-size="13.5" fill="#5a4e3c">p</text></svg>
<svg class="a" style="left:503.5px;top:171px;" width="18" height="18" viewBox="0 0 18 18"><path d="M2.4 16L10.6 7.8" stroke="#6e6e6e" stroke-width="3.4"/><circle cx="12.5" cy="5.6" r="4.9" fill="#6e6e6e"/><path d="M12.6 5.5L17.5 0.6" stroke="#f2f2f2" stroke-width="3.2"/></svg>
<div class="a" style="left:532px;top:168px;width:1px;height:25px;background:#cacaca;"></div>
<svg class="a" style="left:599px;top:177px;" width="12" height="9" viewBox="0 0 12 9"><path d="M1 1.2L5.5 5.8L10 1.2" fill="none" stroke="#7f93a8" stroke-width="1.6"/></svg>
<svg class="a" style="left:626px;top:173px;" width="20" height="14" viewBox="0 0 20 14"><path d="M1.5 4.3L7.7 11.5L17.6 1.2" fill="none" stroke="#bdbdbd" stroke-width="2.2"/></svg>
<svg class="a" style="left:660px;top:172px;" width="17" height="17" viewBox="0 0 17 17"><path d="M5.8 1L0.8 6.5L5.8 11.4Z" fill="#bdbdbd"/><path d="M4 6.5H9A5.2 5.2 0 0 1 9.6 16.4" fill="none" stroke="#bdbdbd" stroke-width="2.6"/></svg>
<div class="a" style="left:688px;top:168px;width:1px;height:25px;background:#cacaca;"></div>
<div class="a" style="left:704px;top:174px;width:12px;height:12px;background:#bdbdbd;"></div>
<svg class="a" style="left:1414px;top:177px;" width="12" height="9" viewBox="0 0 12 9"><path d="M1 1.2L5.5 5.8L10 1.2" fill="none" stroke="#7f93a8" stroke-width="1.6"/></svg>
<svg class="a" style="left:1418px;top:198px;" width="17" height="15" viewBox="0 0 17 15"><path d="M1.8 6.7L6.3 11.3L14.8 2.4" fill="none" stroke="#59a869" stroke-width="3"/></svg>
<svg class="a" style="left:814px;top:206px;" width="11" height="20" viewBox="0 0 11 20"><path d="M2.5 2.2H4.8L5.5 2.9L6.2 2.2H8.5M5.5 2.9V17.3M2.5 18H4.8L5.5 17.3L6.2 18H8.5" fill="none" stroke="#000" stroke-width="2.6"/><path d="M2.5 2.2H4.8L5.5 2.9L6.2 2.2H8.5M5.5 2.9V17.3M2.5 18H4.8L5.5 17.3L6.2 18H8.5" fill="none" stroke="#fff" stroke-width="1.2"/></svg>
<svg class="a" style="left:331px;top:602px;" width="12" height="12" viewBox="0 0 12 12"><path d="M1 1L10 10M10 1L1 10" stroke="#b0b0b0" stroke-width="1.3"/></svg>
<svg class="a" style="left:1336px;top:598px;" width="18" height="18" viewBox="0 0 18 18"><circle cx="9" cy="9" r="7.2" fill="none" stroke="#6e6e6e" stroke-width="1.3"/><path d="M9 2.4V5.6M9 12.4V15.6M2.4 9H5.6M12.4 9H15.6" stroke="#6e6e6e" stroke-width="1.5"/></svg>
<div class="a" style="left:1365px;top:594px;width:1px;height:25px;background:#c4c7cc;"></div>
<svg class="a" style="left:1377px;top:598px;" width="18" height="18" viewBox="0 0 18 18"><path fill="#6e6e6e" fill-rule="evenodd" d="M9 9m-1.6 -8h3.2l0.5 2.4a6 6 0 0 1 1.6 0.9l2.3-0.8 1.6 2.8-1.8 1.6a6 6 0 0 1 0 1.9l1.8 1.6-1.6 2.8-2.3-0.8a6 6 0 0 1-1.6 0.9l-0.5 2.4h-3.2l-0.5-2.4a6 6 0 0 1-1.6-0.9l-2.3 0.8-1.6-2.8 1.8-1.6a6 6 0 0 1 0-1.9l-1.8-1.6 1.6-2.8 2.3 0.8a6 6 0 0 1 1.6-0.9z M9 9m-2.9 0a2.9 2.9 0 1 0 5.8 0a2.9 2.9 0 1 0 -5.8 0z"/></svg>
<div class="a" style="left:1410px;top:606px;width:16px;height:2px;background:#6e6e6e;"></div>
<svg class="a" style="left:39.5px;top:633px;" width="18" height="18" viewBox="0 0 18 18"><path d="M2.4 16L10.6 7.8" stroke="#6e6e6e" stroke-width="3.4"/><circle cx="12.5" cy="5.6" r="4.9" fill="#6e6e6e"/><path d="M12.6 5.5L17.5 0.6" stroke="#f2f2f2" stroke-width="3.2"/></svg>
<svg class="a" style="left:38px;top:664px;" width="20" height="20" viewBox="0 0 20 20"><circle cx="10" cy="10" r="8.6" fill="#f2ca86"/><text x="5.7" y="14.6" font-family="Liberation Sans" font-size="13.5" fill="#5a4e3c">p</text></svg>
<svg class="a" style="left:37px;top:696px;" width="22" height="21" viewBox="0 0 22 21"><rect x="2.8" y="5.6" width="13" height="12.3" fill="#fff" stroke="#8c8c8c" stroke-width="3"/><path d="M4.8 10.3H12.3M4.8 14.1H13.3" stroke="#777" stroke-width="1.2"/><circle cx="15.2" cy="6.2" r="5.4" fill="#a3d6f5" stroke="#3b9ad9" stroke-width="1.1"/><path d="M15.2 2.8V6.5H18" fill="none" stroke="#333" stroke-width="1"/></svg>
<svg class="a" style="left:40px;top:732px;" width="17" height="15" viewBox="0 0 17 15"><rect x="0.5" y="0.8" width="9" height="5.6" fill="#6e6e6e"/><rect x="11" y="0.8" width="4.8" height="5.6" fill="#6e6e6e"/><rect x="0.5" y="7.8" width="15.3" height="5.6" fill="#6e6e6e"/></svg>
<div class="a" style="left:42px;top:774px;width:12px;height:12px;background:#bdbdbd;"></div>
<svg class="a" style="left:73px;top:628px;" width="20" height="20" viewBox="0 0 20 20"><rect x="0" y="0" width="18" height="18" fill="#9aa7b0"/><rect x="0" y="0" width="18" height="4.3" fill="#4ab4e0"/><rect x="1.3" y="1.5" width="5.2" height="1.3" fill="#ffffff" opacity="0.85"/><rect x="1.3" y="4.6" width="5.2" height="2.2" fill="#ffffff" opacity="0.9"/><rect x="1.3" y="8.0" width="5.2" height="1.1" fill="#ffffff" opacity="0.9"/><rect x="1.3" y="10.4" width="5.2" height="1.1" fill="#ffffff" opacity="0.9"/><rect x="1.3" y="12.8" width="5.2" height="1.1" fill="#ffffff" opacity="0.9"/><rect x="1.3" y="15.2" width="5.2" height="1.1" fill="#ffffff" opacity="0.9"/><rect x="8.4" y="1.5" width="3.4" height="1.3" fill="#ffffff" opacity="0.85"/><rect x="8.4" y="4.6" width="3.4" height="2.2" fill="#ffffff" opacity="0.9"/><rect x="8.4" y="8.0" width="3.4" height="1.1" fill="#ffffff" opacity="0.9"/><rect x="8.4" y="10.4" width="3.4" height="1.1" fill="#ffffff" opacity="0.9"/><rect x="8.4" y="12.8" width="3.4" height="1.1" fill="#ffffff" opacity="0.9"/><rect x="8.4" y="15.2" width="3.4" height="1.1" fill="#ffffff" opacity="0.9"/><rect x="13.3" y="1.5" width="3.4" height="1.3" fill="#ffffff" opacity="0.85"/><rect x="13.3" y="4.6" width="3.4" height="2.2" fill="#ffffff" opacity="0.9"/><rect x="13.3" y="8.0" width="3.4" height="1.1" fill="#ffffff" opacity="0.9"/><rect x="13.3" y="10.4" width="3.4" height="1.1" fill="#ffffff" opacity="0.9"/><rect x="13.3" y="12.8" width="3.4" height="1.1" fill="#ffffff" opacity="0.9"/><rect x="13.3" y="15.2" width="3.4" height="1.1" fill="#ffffff" opacity="0.9"/></svg>
<svg class="a" style="left:567px;top:630px;" width="10" height="10" viewBox="0 0 10 10"><path d="M1 1L9 9M9 1L1 9" stroke="#555" stroke-width="1.4"/></svg>
<svg class="a" style="left:74px;top:661px;" width="18" height="16" viewBox="0 0 18 16"><rect x="1" y="1" width="1" height="14" fill="#c4c4c4"/><path d="M10 1V15L3 8Z M16.8 1V15L9.8 8Z" fill="#c4c4c4"/></svg>
<svg class="a" style="left:109px;top:661px;" width="12" height="16" viewBox="0 0 12 16"><path d="M10.8 1.3V14.9L1 8.1Z" fill="#c4c4c4"/></svg>
<svg class="a" style="left:196px;top:666px;" width="10" height="8" viewBox="0 0 10 8"><path d="M0.9 0.8L3.6 3.5L0.9 6.2M5.4 0.8L8.1 3.5L5.4 6.2" fill="none" stroke="#6e6e6e" stroke-width="1.3"/></svg>
<svg class="a" style="left:314px;top:667px;" width="12" height="9" viewBox="0 0 12 9"><path d="M1 1.2L5.5 5.8L10 1.2" fill="none" stroke="#7f93a8" stroke-width="1.6"/></svg>
<svg class="a" style="left:343px;top:661px;" width="21" height="22" viewBox="0 0 21 22"><rect x="7.3" y="1.2" width="2" height="7" fill="#6e6e6e"/><path d="M3.9 7.4H12.9L8.3 12.2Z" fill="#6e6e6e"/><rect x="1.2" y="14" width="15.4" height="2.4" fill="#6e6e6e"/><path d="M14 17H20L17 21Z" fill="#6e6e6e"/></svg>
<svg class="a" style="left:376px;top:661px;" width="18" height="18" viewBox="0 0 18 18"><rect x="1.2" y="1.3" width="15.3" height="2.4" fill="#6e6e6e"/><path d="M4.5 10.4H13.2L8.9 5.8Z" fill="#6e6e6e"/><rect x="7.9" y="10" width="2" height="6.6" fill="#6e6e6e"/></svg>
<svg class="a" style="left:561px;top:661px;" width="20" height="22" viewBox="0 0 20 22"><path fill="#6e6e6e" fill-rule="evenodd" d="M9 9.5m-1.6 -8h3.2l0.5 2.4a6 6 0 0 1 1.6 0.9l2.3-0.8 1.6 2.8-1.8 1.6a6 6 0 0 1 0 1.9l1.8 1.6-1.6 2.8-2.3-0.8a6 6 0 0 1-1.6 0.9l-0.5 2.4h-3.2l-0.5-2.4a6 6 0 0 1-1.6-0.9l-2.3 0.8-1.6-2.8 1.8-1.6a6 6 0 0 1 0-1.9l-1.8-1.6 1.6-2.8 2.3 0.8a6 6 0 0 1 1.6-0.9z M9 9.5m-2.9 0a2.9 2.9 0 1 0 5.8 0a2.9 2.9 0 1 0 -5.8 0z"/><path d="M13 17.6H19L16 21Z" fill="#6e6e6e" stroke="#f2f2f2" stroke-width="0.6"/></svg>
<svg class="a" style="left:121px;top:690px;" width="20" height="20" viewBox="0 0 20 20"><rect x="0" y="0" width="18" height="18" fill="#6f7b84"/><rect x="1.3" y="1.5" width="5.2" height="1.3" fill="#1d1d1d" opacity="0.85"/><rect x="1.3" y="4.6" width="5.2" height="2.2" fill="#1d1d1d" opacity="0.85"/><rect x="1.3" y="8.0" width="5.2" height="1.1" fill="#1d1d1d" opacity="0.85"/><rect x="1.3" y="10.4" width="5.2" height="1.1" fill="#1d1d1d" opacity="0.85"/><rect x="1.3" y="12.8" width="5.2" height="1.1" fill="#1d1d1d" opacity="0.85"/><rect x="1.3" y="15.2" width="5.2" height="1.1" fill="#1d1d1d" opacity="0.85"/><rect x="8.4" y="1.5" width="3.4" height="1.3" fill="#1d1d1d" opacity="0.85"/><rect x="8.4" y="4.6" width="3.4" height="2.2" fill="#1d1d1d" opacity="0.85"/><rect x="8.4" y="8.0" width="3.4" height="1.1" fill="#1d1d1d" opacity="0.85"/><rect x="8.4" y="10.4" width="3.4" height="1.1" fill="#1d1d1d" opacity="0.85"/><rect x="8.4" y="12.8" width="3.4" height="1.1" fill="#1d1d1d" opacity="0.85"/><rect x="8.4" y="15.2" width="3.4" height="1.1" fill="#1d1d1d" opacity="0.85"/><rect x="13.3" y="1.5" width="3.4" height="1.3" fill="#1d1d1d" opacity="0.85"/><rect x="13.3" y="4.6" width="3.4" height="2.2" fill="#1d1d1d" opacity="0.85"/><rect x="13.3" y="8.0" width="3.4" height="1.1" fill="#1d1d1d" opacity="0.85"/><rect x="13.3" y="10.4" width="3.4" height="1.1" fill="#1d1d1d" opacity="0.85"/><rect x="13.3" y="12.8" width="3.4" height="1.1" fill="#1d1d1d" opacity="0.85"/><rect x="13.3" y="15.2" width="3.4" height="1.1" fill="#1d1d1d" opacity="0.85"/><rect x="12" y="0" width="6" height="12.6" fill="#e8b04a"/><rect x="13.2" y="2.7" width="3.6" height="0.9" fill="#9a7434"/><rect x="13.2" y="5.2" width="3.6" height="0.9" fill="#9a7434"/><rect x="13.2" y="7.7" width="3.6" height="0.9" fill="#9a7434"/><rect x="13.2" y="10.0" width="3.6" height="0.9" fill="#9a7434"/><rect x="12.2" y="12.6" width="5.8" height="5.4" fill="#1d1d1d"/><circle cx="15.8" cy="15.8" r="3" fill="#a0aab2"/></svg>
<svg class="a" style="left:190px;top:694px;" width="9" height="11" viewBox="0 0 9 11"><path d="M0.5 5.2H7.3L3.9 1.2Z M0.5 6H7.3L3.9 9.8Z" fill="#4aa6d9"/></svg>
<svg class="a" style="left:207px;top:690px;" width="20" height="20" viewBox="0 0 20 20"><rect x="0" y="0" width="18" height="18" fill="#6f7b84"/><rect x="1.3" y="1.5" width="5.2" height="1.3" fill="#1d1d1d" opacity="0.85"/><rect x="1.3" y="4.6" width="5.2" height="2.2" fill="#1d1d1d" opacity="0.85"/><rect x="1.3" y="8.0" width="5.2" height="1.1" fill="#1d1d1d" opacity="0.85"/><rect x="1.3" y="10.4" width="5.2" height="1.1" fill="#1d1d1d" opacity="0.85"/><rect x="1.3" y="12.8" width="5.2" height="1.1" fill="#1d1d1d" opacity="0.85"/><rect x="1.3" y="15.2" width="5.2" height="1.1" fill="#1d1d1d" opacity="0.85"/><rect x="8.4" y="1.5" width="3.4" height="1.3" fill="#1d1d1d" opacity="0.85"/><rect x="8.4" y="4.6" width="3.4" height="2.2" fill="#1d1d1d" opacity="0.85"/><rect x="8.4" y="8.0" width="3.4" height="1.1" fill="#1d1d1d" opacity="0.85"/><rect x="8.4" y="10.4" width="3.4" height="1.1" fill="#1d1d1d" opacity="0.85"/><rect x="8.4" y="12.8" width="3.4" height="1.1" fill="#1d1d1d" opacity="0.85"/><rect x="8.4" y="15.2" width="3.4" height="1.1" fill="#1d1d1d" opacity="0.85"/><rect x="13.3" y="1.5" width="3.4" height="1.3" fill="#1d1d1d" opacity="0.85"/><rect x="13.3" y="4.6" width="3.4" height="2.2" fill="#1d1d1d" opacity="0.85"/><rect x="13.3" y="8.0" width="3.4" height="1.1" fill="#1d1d1d" opacity="0.85"/><rect x="13.3" y="10.4" width="3.4" height="1.1" fill="#1d1d1d" opacity="0.85"/><rect x="13.3" y="12.8" width="3.4" height="1.1" fill="#1d1d1d" opacity="0.85"/><rect x="13.3" y="15.2" width="3.4" height="1.1" fill="#1d1d1d" opacity="0.85"/></svg>
<svg class="a" style="left:286px;top:694px;" width="9" height="11" viewBox="0 0 9 11"><path d="M0.5 5.2H7.3L3.9 1.2Z M0.5 6H7.3L3.9 9.8Z" fill="#4aa6d9"/></svg>
<svg class="a" style="left:303px;top:690px;" width="20" height="20" viewBox="0 0 20 20"><rect x="0" y="0" width="18" height="18" fill="#6f7b84"/><rect x="1.3" y="1.5" width="5.2" height="1.3" fill="#1d1d1d" opacity="0.85"/><rect x="1.3" y="4.6" width="5.2" height="2.2" fill="#1d1d1d" opacity="0.85"/><rect x="1.3" y="8.0" width="5.2" height="1.1" fill="#1d1d1d" opacity="0.85"/><rect x="1.3" y="10.4" width="5.2" height="1.1" fill="#1d1d1d" opacity="0.85"/><rect x="1.3" y="12.8" width="5.2" height="1.1" fill="#1d1d1d" opacity="0.85"/><rect x="1.3" y="15.2" width="5.2" height="1.1" fill="#1d1d1d" opacity="0.85"/><rect x="8.4" y="1.5" width="3.4" height="1.3" fill="#1d1d1d" opacity="0.85"/><rect x="8.4" y="4.6" width="3.4" height="2.2" fill="#1d1d1d" opacity="0.85"/><rect x="8.4" y="8.0" width="3.4" height="1.1" fill="#1d1d1d" opacity="0.85"/><rect x="8.4" y="10.4" width="3.4" height="1.1" fill="#1d1d1d" opacity="0.85"/><rect x="8.4" y="12.8" width="3.4" height="1.1" fill="#1d1d1d" opacity="0.85"/><rect x="8.4" y="15.2" width="3.4" height="1.1" fill="#1d1d1d" opacity="0.85"/><rect x="13.3" y="1.5" width="3.4" height="1.3" fill="#1d1d1d" opacity="0.85"/><rect x="13.3" y="4.6" width="3.4" height="2.2" fill="#1d1d1d" opacity="0.85"/><rect x="13.3" y="8.0" width="3.4" height="1.1" fill="#1d1d1d" opacity="0.85"/><rect x="13.3" y="10.4" width="3.4" height="1.1" fill="#1d1d1d" opacity="0.85"/><rect x="13.3" y="12.8" width="3.4" height="1.1" fill="#1d1d1d" opacity="0.85"/><rect x="13.3" y="15.2" width="3.4" height="1.1" fill="#1d1d1d" opacity="0.85"/></svg>
<svg class="a" style="left:382px;top:694px;" width="9" height="11" viewBox="0 0 9 11"><path d="M0.5 5.2H7.3L3.9 1.2Z M0.5 6H7.3L3.9 9.8Z" fill="#4aa6d9"/></svg>
<svg class="a" style="left:407px;top:690px;" width="20" height="20" viewBox="0 0 20 20"><rect x="0" y="0" width="18" height="18" fill="#6f7b84"/><rect x="1.3" y="1.5" width="5.2" height="1.3" fill="#1d1d1d" opacity="0.85"/><rect x="1.3" y="4.6" width="5.2" height="2.2" fill="#1d1d1d" opacity="0.85"/><rect x="1.3" y="8.0" width="5.2" height="1.1" fill="#1d1d1d" opacity="0.85"/><rect x="1.3" y="10.4" width="5.2" height="1.1" fill="#1d1d1d" opacity="0.85"/><rect x="1.3" y="12.8" width="5.2" height="1.1" fill="#1d1d1d" opacity="0.85"/><rect x="1.3" y="15.2" width="5.2" height="1.1" fill="#1d1d1d" opacity="0.85"/><rect x="8.4" y="1.5" width="3.4" height="1.3" fill="#1d1d1d" opacity="0.85"/><rect x="8.4" y="4.6" width="3.4" height="2.2" fill="#1d1d1d" opacity="0.85"/><rect x="8.4" y="8.0" width="3.4" height="1.1" fill="#1d1d1d" opacity="0.85"/><rect x="8.4" y="10.4" width="3.4" height="1.1" fill="#1d1d1d" opacity="0.85"/><rect x="8.4" y="12.8" width="3.4" height="1.1" fill="#1d1d1d" opacity="0.85"/><rect x="8.4" y="15.2" width="3.4" height="1.1" fill="#1d1d1d" opacity="0.85"/><rect x="13.3" y="1.5" width="3.4" height="1.3" fill="#1d1d1d" opacity="0.85"/><rect x="13.3" y="4.6" width="3.4" height="2.2" fill="#1d1d1d" opacity="0.85"/><rect x="13.3" y="8.0" width="3.4" height="1.1" fill="#1d1d1d" opacity="0.85"/><rect x="13.3" y="10.4" width="3.4" height="1.1" fill="#1d1d1d" opacity="0.85"/><rect x="13.3" y="12.8" width="3.4" height="1.1" fill="#1d1d1d" opacity="0.85"/><rect x="13.3" y="15.2" width="3.4" height="1.1" fill="#1d1d1d" opacity="0.85"/></svg>
<svg class="a" style="left:478px;top:694px;" width="9" height="11" viewBox="0 0 9 11"><path d="M0.5 5.2H7.3L3.9 1.2Z M0.5 6H7.3L3.9 9.8Z" fill="#4aa6d9"/></svg>
<svg class="a" style="left:496px;top:690px;" width="20" height="20" viewBox="0 0 20 20"><rect x="0" y="0" width="18" height="18" fill="#6f7b84"/><rect x="1.3" y="1.5" width="5.2" height="1.3" fill="#1d1d1d" opacity="0.85"/><rect x="1.3" y="4.6" width="5.2" height="2.2" fill="#1d1d1d" opacity="0.85"/><rect x="1.3" y="8.0" width="5.2" height="1.1" fill="#1d1d1d" opacity="0.85"/><rect x="1.3" y="10.4" width="5.2" height="1.1" fill="#1d1d1d" opacity="0.85"/><rect x="1.3" y="12.8" width="5.2" height="1.1" fill="#1d1d1d" opacity="0.85"/><rect x="1.3" y="15.2" width="5.2" height="1.1" fill="#1d1d1d" opacity="0.85"/><rect x="8.4" y="1.5" width="3.4" height="1.3" fill="#1d1d1d" opacity="0.85"/><rect x="8.4" y="4.6" width="3.4" height="2.2" fill="#1d1d1d" opacity="0.85"/><rect x="8.4" y="8.0" width="3.4" height="1.1" fill="#1d1d1d" opacity="0.85"/><rect x="8.4" y="10.4" width="3.4" height="1.1" fill="#1d1d1d" opacity="0.85"/><rect x="8.4" y="12.8" width="3.4" height="1.1" fill="#1d1d1d" opacity="0.85"/><rect x="8.4" y="15.2" width="3.4" height="1.1" fill="#1d1d1d" opacity="0.85"/><rect x="13.3" y="1.5" width="3.4" height="1.3" fill="#1d1d1d" opacity="0.85"/><rect x="13.3" y="4.6" width="3.4" height="2.2" fill="#1d1d1d" opacity="0.85"/><rect x="13.3" y="8.0" width="3.4" height="1.1" fill="#1d1d1d" opacity="0.85"/><rect x="13.3" y="10.4" width="3.4" height="1.1" fill="#1d1d1d" opacity="0.85"/><rect x="13.3" y="12.8" width="3.4" height="1.1" fill="#1d1d1d" opacity="0.85"/><rect x="13.3" y="15.2" width="3.4" height="1.1" fill="#1d1d1d" opacity="0.85"/></svg>
<svg class="a" style="left:575px;top:694px;" width="9" height="11" viewBox="0 0 9 11"><path d="M0.5 5.2H7.3L3.9 1.2Z M0.5 6H7.3L3.9 9.8Z" fill="#4aa6d9"/></svg>
<svg class="a" style="left:593px;top:628px;" width="19" height="19" viewBox="0 0 19 19"><rect x="0" y="0" width="18" height="18" fill="#808080"/><rect x="0" y="0" width="18" height="4.2" fill="#4a9fd0"/><rect x="3" y="4.2" width="12" height="11" fill="#9ecbea" stroke="#e0eef8" stroke-width="0.6"/><rect x="5.3" y="6.4" width="7.6" height="1" fill="#6a7c88"/><rect x="5.3" y="9.2" width="4.6" height="2.4" fill="#555"/></svg>
<svg class="a" style="left:596px;top:665px;" width="19" height="19" viewBox="0 0 19 19"><rect x="1" y="1.5" width="15" height="2" fill="#6e6e6e"/><rect x="1" y="12.5" width="2.8" height="2" fill="#6e6e6e"/><path d="M1 8H12.5A3.3 3.3 0 0 1 12.5 14.5H8" fill="none" stroke="#6e6e6e" stroke-width="2"/><path d="M9.8 11.3V17.6L6 14.5Z" fill="#6e6e6e"/></svg>
<svg class="a" style="left:591px;top:693px;" width="28" height="28" viewBox="0 0 28 28"><rect x="0.5" y="0.5" width="26" height="26" fill="#e2e2e2" stroke="#cdcdcd" stroke-width="1"/></svg>
<svg class="a" style="left:596px;top:697px;" width="19" height="19" viewBox="0 0 19 19"><rect x="1" y="3" width="4.2" height="2" fill="#6e6e6e"/><rect x="1" y="8.2" width="4.2" height="2" fill="#6e6e6e"/><rect x="1" y="13.5" width="16" height="2" fill="#6e6e6e"/><rect x="10.8" y="1" width="2" height="8" fill="#6e6e6e"/><path d="M7.4 7.3H16.2L11.8 11.8Z" fill="#6e6e6e"/></svg>
<svg class="a" style="left:596px;top:730px;" width="19" height="19" viewBox="0 0 19 19"><rect x="4" y="1.2" width="10" height="3.3" fill="#6e6e6e"/><path d="M1 5.5H17V12.8H14.2V10.3H3.8V12.8H1Z" fill="#6e6e6e"/><path d="M4.3 10.8H13.7V16.2H4.3Z" fill="none" stroke="#6e6e6e" stroke-width="1.6"/><rect x="14.2" y="6.5" width="1.5" height="1.5" fill="#f2f2f2"/></svg>
<svg class="a" style="left:597px;top:762px;" width="16" height="19" viewBox="0 0 16 19"><rect x="1" y="2.5" width="13" height="2" fill="#6e6e6e"/><rect x="5" y="0.8" width="5" height="2" fill="#6e6e6e"/><path d="M2.4 5.5H12.6V15.5A1.7 1.7 0 0 1 10.9 17.2H4.1A1.7 1.7 0 0 1 2.4 15.5Z" fill="#6e6e6e"/></svg>
<svg class="a" style="left:42px;top:965px;" width="16" height="14" viewBox="0 0 16 14"><rect x="0.5" y="0.8" width="2.5" height="2.5" fill="#6e6e6e"/><rect x="4.5" y="1" width="9.5" height="2" fill="#6e6e6e"/><rect x="0.5" y="5.3" width="2.5" height="2.5" fill="#6e6e6e"/><rect x="4.5" y="5.5" width="9.5" height="2" fill="#6e6e6e"/><rect x="0.5" y="9.8" width="2.5" height="2.5" fill="#6e6e6e"/><rect x="4.5" y="10" width="9.5" height="2" fill="#6e6e6e"/></svg>
<div class="a" style="left:62px;top:980px;width:8px;height:1px;background:#1e1e1e;"></div>
<svg class="a" style="left:145px;top:965px;" width="17" height="16" viewBox="0 0 17 16"><rect x="0.5" y="0.5" width="13.5" height="2.8" fill="#6e6e6e"/><path d="M0.5 4.5H3V13.5H0.5Z M4 4.5H9V6.3H4Z M4 8.2H8.5V10H4Z M4 11.7H9V13.5H4Z" fill="#6e6e6e"/><path d="M10.5 5.5L14.6 9.4L10.5 13.5" fill="none" stroke="#6e6e6e" stroke-width="1.7"/></svg>
<svg class="a" style="left:307px;top:964px;" width="17" height="16" viewBox="0 0 17 16"><ellipse cx="7.5" cy="2.6" rx="7" ry="2.2" fill="#6e6e6e"/><path d="M0.5 4.8C1.5 6.6 13.5 6.6 14.5 4.8V7C13.5 8.8 1.5 8.8 0.5 7Z M0.5 8.6C1.5 10.3 7 10.5 8 10.4L6.8 12C4 12 1.3 11.5 0.5 10.8Z M0.5 12.3C1.5 13.8 4 14.2 5.5 14.2V15.2C3.5 15.2 1.3 14.8 0.5 14Z" fill="#6e6e6e"/><path d="M7.6 11.3L10.4 14.2L15.6 8.6" fill="none" stroke="#6e6e6e" stroke-width="1.7"/></svg>
<svg class="a" style="left:1343px;top:963px;" width="18" height="18" viewBox="0 0 18 18"><path d="M15.4 16.2H8.4A7.2 7.2 0 1 1 15.4 9.4Z" fill="none" stroke="#6e6e6e" stroke-width="1.5"/></svg>
<svg class="a" style="left:13px;top:991px;" width="18" height="17" viewBox="0 0 18 17"><rect x="4.2" y="1.2" width="12" height="11.8" fill="none" stroke="#6e6e6e" stroke-width="1.5"/><path d="M1.6 4.5V15.6H12.4" fill="none" stroke="#9a9a9a" stroke-width="1.4"/></svg>
<svg class="a" style="left:1387px;top:994px;" width="8" height="13" viewBox="0 0 8 13"><path d="M0.6 5H6.8L3.7 1Z M0.6 7.2H6.8L3.7 11.2Z" fill="#555"/></svg>
<svg class="a" style="left:1407px;top:992px;" width="16" height="15" viewBox="0 0 16 15"><path d="M2.5 7V4A3 3 0 0 1 8.5 4V6" fill="none" stroke="#6e6e6e" stroke-width="1.6"/><rect x="6.5" y="6.8" width="8.5" height="7.3" fill="#6e6e6e"/></svg>
<svg class="a" style="left:1438px;top:990px;" width="18" height="20" viewBox="0 0 18 20"><g fill="none" stroke="#707070" stroke-width="1.5"><path d="M4.2 8.5V4.2Q4.2 1.7 6.7 1.7H11.3Q13.8 1.7 13.8 4.2V8.5"/><path d="M1 8.6H17" stroke-width="1.7"/><path d="M3.4 10.5Q2.4 12.6 4.2 14.6L6 17"/><path d="M14.6 10.5Q15.6 12.6 13.8 14.6L12 17"/><path d="M6.6 14Q9 11.8 11.4 14" stroke-width="1.3"/></g><circle cx="9" cy="4.8" r="1" fill="#707070"/><rect x="5.3" y="9.8" width="1.8" height="1.2" fill="#9a9a9a"/><rect x="9.6" y="9.8" width="1.8" height="1.2" fill="#9a9a9a"/><path d="M2.6 19.3L5.2 16.2H7.6V19.3Z M14.8 19.3L12.2 16.2H9.8V19.3Z" fill="#707070"/></svg>
</body></html>
